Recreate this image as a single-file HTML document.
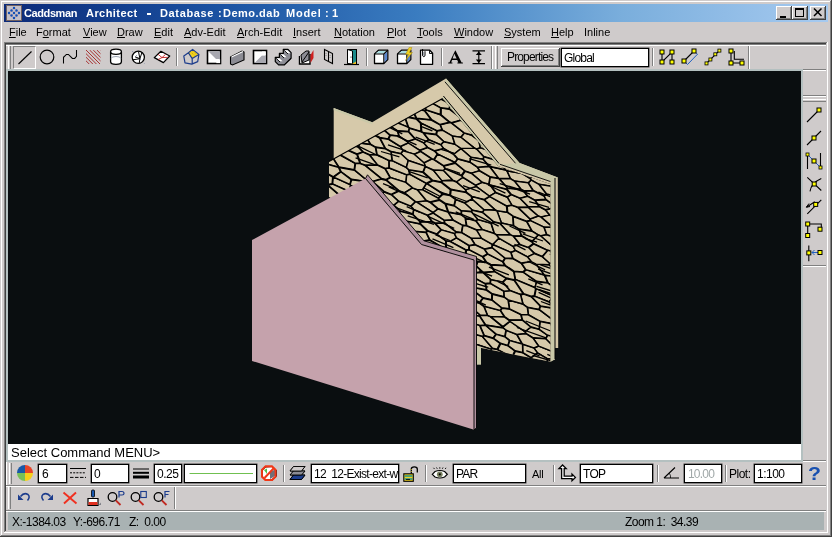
<!DOCTYPE html><html><head><meta charset="utf-8"><style>
html,body{margin:0;padding:0}
body{width:832px;height:537px;position:relative;overflow:hidden;background:#cfcbcb;font-family:"Liberation Sans",sans-serif}
div,svg{position:absolute}
.t{white-space:pre;color:#000;line-height:0;will-change:transform}
u{text-decoration:underline;text-underline-offset:1px;text-decoration-thickness:1px}
</style></head><body>
<div style="left:1px;top:1px;width:829px;height:1px;background:#fff"></div><div style="left:1px;top:1px;width:1px;height:534px;background:#fff"></div><div style="left:830px;top:1px;width:1px;height:535px;background:#808080"></div><div style="left:831px;top:0px;width:1px;height:537px;background:#404040"></div><div style="left:1px;top:535px;width:830px;height:1px;background:#808080"></div><div style="left:0px;top:536px;width:832px;height:1px;background:#404040"></div><div style="left:4px;top:4px;width:824px;height:18px;background:linear-gradient(to right,#0c2a78 0%,#1a50a0 25%,#3a7cc0 50%,#7aaedc 75%,#a6caf0 100%)"></div><svg style="left:6px;top:5px" width="16" height="16" viewBox="0 0 16 16">
<rect x="0" y="0" width="16" height="16" fill="#c4c0c8"/><rect x="0.5" y="0.5" width="15" height="15" fill="none" stroke="#706060"/>
<g stroke="#d08080" stroke-width="0.6" fill="none"><path d="M8 2.5 L13.5 8 L8 13.5 L2.5 8 Z M5.3 5.3 L10.7 10.7 M10.7 5.3 L5.3 10.7"/></g>
<g fill="#1050b8"><circle cx="8" cy="3" r="1.2"/><circle cx="5.5" cy="5.5" r="1.2"/><circle cx="10.5" cy="5.5" r="1.2"/><circle cx="3" cy="8" r="1.2"/><circle cx="8" cy="8" r="1.2"/><circle cx="13" cy="8" r="1.2"/><circle cx="5.5" cy="10.5" r="1.2"/><circle cx="10.5" cy="10.5" r="1.2"/><circle cx="8" cy="13" r="1.2"/></g></svg><div class="t" style="left:24px;top:13px;font-size:11px;letter-spacing:-0.4px;font-weight:bold;color:#fff;">Caddsman</div><div class="t" style="left:86px;top:13px;font-size:11px;letter-spacing:0.45px;font-weight:bold;color:#fff;">Architect</div><div class="t" style="left:160px;top:13px;font-size:11px;letter-spacing:0.65px;font-weight:bold;color:#fff;">Database</div><div class="t" style="left:218px;top:13px;font-size:11px;letter-spacing:0px;font-weight:bold;color:#fff;">:</div><div class="t" style="left:223px;top:13px;font-size:11px;letter-spacing:0.5px;font-weight:bold;color:#fff;">Demo.dab</div><div class="t" style="left:286px;top:13px;font-size:11px;letter-spacing:0.75px;font-weight:bold;color:#fff;">Model</div><div class="t" style="left:325px;top:13px;font-size:11px;letter-spacing:0px;font-weight:bold;color:#fff;">:</div><div class="t" style="left:332px;top:13px;font-size:11px;letter-spacing:0px;font-weight:bold;color:#fff;">1</div><div style="left:147px;top:13px;width:4px;height:2px;background:#fff"></div><div style="left:776px;top:6px;width:16px;height:14px;background:#cfcbcb;box-shadow:inset -1px -1px #404040,inset 1px 1px #fff,inset -2px -2px #808080"></div><div style="left:780px;top:16px;width:6px;height:2px;background:#000"></div><div style="left:792px;top:6px;width:16px;height:14px;background:#cfcbcb;box-shadow:inset -1px -1px #404040,inset 1px 1px #fff,inset -2px -2px #808080"></div><div style="left:795px;top:8px;width:9px;height:9px;box-sizing:border-box;border:1px solid #000;border-top-width:2px"></div><div style="left:810px;top:6px;width:16px;height:14px;background:#cfcbcb;box-shadow:inset -1px -1px #404040,inset 1px 1px #fff,inset -2px -2px #808080"></div><svg style="left:813px;top:8px" width="10" height="9"><path d="M1 0.5 L8.5 8 M8.5 0.5 L1 8" stroke="#000" stroke-width="1.5"/></svg><div class="t" style="left:9px;top:32px;font-size:11px;letter-spacing:0px;color:#000;"><u>F</u>ile</div><div class="t" style="left:36px;top:32px;font-size:11px;letter-spacing:0px;color:#000;">F<u>o</u>rmat</div><div class="t" style="left:83px;top:32px;font-size:11px;letter-spacing:0px;color:#000;"><u>V</u>iew</div><div class="t" style="left:117px;top:32px;font-size:11px;letter-spacing:0px;color:#000;"><u>D</u>raw</div><div class="t" style="left:154px;top:32px;font-size:11px;letter-spacing:0px;color:#000;"><u>E</u>dit</div><div class="t" style="left:184px;top:32px;font-size:11px;letter-spacing:0px;color:#000;"><u>A</u>dv-Edit</div><div class="t" style="left:237px;top:32px;font-size:11px;letter-spacing:0px;color:#000;"><u>A</u>rch-Edit</div><div class="t" style="left:293px;top:32px;font-size:11px;letter-spacing:0px;color:#000;"><u>I</u>nsert</div><div class="t" style="left:334px;top:32px;font-size:11px;letter-spacing:0px;color:#000;"><u>N</u>otation</div><div class="t" style="left:387px;top:32px;font-size:11px;letter-spacing:0px;color:#000;"><u>P</u>lot</div><div class="t" style="left:417px;top:32px;font-size:11px;letter-spacing:0px;color:#000;"><u>T</u>ools</div><div class="t" style="left:454px;top:32px;font-size:11px;letter-spacing:0px;color:#000;"><u>W</u>indow</div><div class="t" style="left:504px;top:32px;font-size:11px;letter-spacing:0px;color:#000;"><u>S</u>ystem</div><div class="t" style="left:551px;top:32px;font-size:11px;letter-spacing:0px;color:#000;"><u>H</u>elp</div><div class="t" style="left:584px;top:32px;font-size:11px;letter-spacing:0px;color:#000;">Inline</div><div style="left:4px;top:42px;width:823px;height:1px;background:#808080"></div><div style="left:4px;top:43px;width:822px;height:1px;background:#404040"></div><div style="left:4px;top:42px;width:1px;height:490px;background:#808080"></div><div style="left:5px;top:43px;width:1px;height:488px;background:#404040"></div><div style="left:827px;top:42px;width:1px;height:491px;background:#fff"></div><div style="left:4px;top:532px;width:824px;height:1px;background:#fff"></div><div style="left:6px;top:44px;width:820px;height:1px;background:#808080"></div><div style="left:6px;top:45px;width:820px;height:1px;background:#fff"></div><div style="left:8px;top:46px;width:1px;height:23px;background:#fff"></div><div style="left:10px;top:46px;width:1px;height:23px;background:#808080"></div><div style="left:13px;top:46px;width:23px;height:23px;box-sizing:border-box;border-top:1px solid #808080;border-left:1px solid #808080;border-right:1px solid #fff;border-bottom:1px solid #fff"></div><div style="left:176px;top:48px;width:1px;height:18px;background:#808080"></div><div style="left:177px;top:48px;width:1px;height:18px;background:#fff"></div><div style="left:366px;top:48px;width:1px;height:18px;background:#808080"></div><div style="left:367px;top:48px;width:1px;height:18px;background:#fff"></div><div style="left:441px;top:48px;width:1px;height:18px;background:#808080"></div><div style="left:442px;top:48px;width:1px;height:18px;background:#fff"></div><svg style="left:12px;top:46px" width="480" height="23" viewBox="12 46 480 23"><path d="M18.5 64 L31.5 51.5" stroke="#000" stroke-width="1.1"/><circle cx="47" cy="57" r="6.8" fill="none" stroke="#000" stroke-width="1.2"/><path d="M63.5 63.5 V57.3 L66.4 54.4 H68.4 L72.4 58.4 H74.7 L76.5 56.4 V50" fill="none" stroke="#000" stroke-width="1.05"/><clipPath id="hc"><rect x="86" y="50" width="14.5" height="14"/></clipPath><g clip-path="url(#hc)" stroke="#a83030" stroke-width="1.0"><path d="M68.0 50 L82.5 64.5"/><path d="M71.6 50 L86.1 64.5"/><path d="M75.2 50 L89.7 64.5"/><path d="M78.8 50 L93.3 64.5"/><path d="M82.4 50 L96.9 64.5"/><path d="M86.0 50 L100.5 64.5"/><path d="M89.6 50 L104.1 64.5"/><path d="M93.2 50 L107.7 64.5"/><path d="M96.8 50 L111.3 64.5"/><path d="M100.4 50 L114.9 64.5"/></g><path d="M110.6 51.8 V61.8 A5.4 2.6 0 0 0 121.4 61.8 V51.8" fill="#fff" stroke="#000" stroke-width="1.3"/><ellipse cx="116" cy="51.8" rx="5.4" ry="2.6" fill="#fff" stroke="#000" stroke-width="1.3"/><path d="M111.2 58.5 A4.8 2 0 0 1 120.8 58.5" fill="none" stroke="#9098a8" stroke-width="0.9"/><circle cx="138.3" cy="57.3" r="6.1" fill="#fff" stroke="#000" stroke-width="1.3"/><path d="M139.9 58.7 L138.5 51.5 M139.9 58.7 L135 56.8 M139.9 58.7 L142 52.3 M139.9 58.7 L133 59.8 M139.9 58.7 L139.2 63.5" stroke="#000" stroke-width="1" fill="none"/><path d="M132.1 51 L144.6 63.7" stroke="#6878a0" stroke-width="0.8" stroke-dasharray="1.2 4.5"/><path d="M154.3 57.6 L160.9 51.3 L169.7 56 L163.4 62.6 Z" fill="#fff" stroke="#000" stroke-width="1.3" stroke-linejoin="round"/><path d="M158.1 54.3 L162 57.6 L165.6 54.3 M162 57.6 L167.8 57.3 M162 57.6 L158.1 59.5" fill="none" stroke="#c02020" stroke-width="0.9"/><path d="M188.4 52.7 L192.6 49.4 L198.9 54.4 L192.2 58.6 Z" fill="#f0d020"/><path d="M192 50.5 L197 54.3 M190.5 52 L195.5 56" stroke="#b09000" stroke-width="0.6" stroke-dasharray="1 1"/><path d="M183.8 56.1 L188.4 52.7 L192.6 49.4 L198.9 54.4 L197.7 61.6 L191.8 64.1 L185 62.8 Z M188.4 52.7 L192.2 58.6 L198.9 54.4 M192.2 58.6 V64" fill="none" stroke="#1c3c8c" stroke-width="1.2" stroke-linejoin="round"/><rect x="207.5" y="50.5" width="13" height="13" fill="#fff" stroke="#000" stroke-width="1.6"/><path d="M208.5 51.5 H220 V59 H216 Z" fill="#a8a8b0"/><rect x="216.3" y="59.3" width="3.8" height="3.8" fill="#fff"/><path d="M230.5 57 L242 51 L244 52 V60 L232.5 65 L230.5 64 Z" fill="#8c8c94" stroke="#000" stroke-width="1.1"/><path d="M231.5 57 L243 51.5" stroke="#fff" stroke-width="1.2"/><rect x="253.5" y="50.5" width="13" height="13" fill="#fff" stroke="#000" stroke-width="1.6"/><path d="M254.5 63 H266 V55.5 H262 Z" fill="#a8a8b0"/><rect x="262" y="51.5" width="3.8" height="3.8" fill="#fff"/><path d="M275.3 57.3 H279.4 V53.4 H283.3 V49.3 H288 L291.1 52.6 V58.3 L284.3 64.9 H278.6 L275.3 61.6 Z" fill="#8c8c94" stroke="#000" stroke-width="1.2" stroke-linejoin="round"/><path d="M276.2 58.3 H279.4 L282.6 61.3 H279.4 Z" fill="#fff"/><path d="M280.2 54.3 H283.4 L286.6 57.3 H283.4 Z" fill="#fff"/><path d="M284.2 50.3 H287.4 L290.6 53.3 H287.4 Z" fill="#fff"/><path d="M276.2 58.3 L280 62" stroke="#000" stroke-width="0.9"/><path d="M280.2 54.3 L284 58" stroke="#000" stroke-width="0.9"/><path d="M284.2 50.3 L288 54" stroke="#000" stroke-width="0.9"/><path d="M284.3 64.9 L291 58.3" stroke="#000" stroke-width="1"/><path d="M299.5 56 V64 H310 V54" fill="#fff" stroke="#000" stroke-width="1.4"/><path d="M301 55 L306 51 H309 V60 L302 63 Z" fill="#8c8c94" stroke="#000"/><path d="M302 62 L309 52" stroke="#000"/><path d="M310.5 55 L313.5 50 V58 L310.5 63 Z" fill="#d02020"/><path d="M324.5 49.5 L332.5 53.5 V63.5 L324.5 59.5 Z" fill="#cfcbcb" stroke="#000" stroke-width="1.1"/><path d="M328.5 51.5 V61.5" stroke="#000"/><path d="M326 53 V57 M330 55 V59" stroke="#888" stroke-dasharray="1 1"/><path d="M344 64.5 H359" stroke="#000" stroke-width="1.2"/><rect x="347.5" y="49.5" width="9" height="14" fill="#1a8a8a" stroke="#000"/><path d="M347.5 49.5 L352.5 51 V64 L347.5 63.5 Z" fill="#fff" stroke="#000"/><circle cx="351" cy="57" r="0.6" fill="#000"/><path d="M352 64 L356 61.5 V64 Z" fill="#f0c020"/><path d="M374.5 54 L378.5 50.2 H387.8 V59.5 L383.8 63.5 H374.5 Z" fill="#fff" stroke="#000" stroke-width="1.3" stroke-linejoin="round"/><path d="M375.4 53.6 L378.8 50.9 H386.5 L383.4 53.6 Z" fill="#a8dce0"/><path d="M384.4 54.2 L387.1 51.5 V59.2 L384.4 62.4 Z" fill="#5a88d0"/><path d="M374.5 54 H383.8 V63.5 M383.8 54 L387.8 50.2" fill="none" stroke="#000" stroke-width="1.1"/><path d="M397.5 54 L401.5 50.2 H410.8 V59.5 L406.8 63.5 H397.5 Z" fill="#fff" stroke="#000" stroke-width="1.3" stroke-linejoin="round"/><path d="M398.4 53.6 L401.8 50.9 H409.5 L406.4 53.6 Z" fill="#a8dce0"/><path d="M407.4 54.2 L410.1 51.5 V59.2 L407.4 62.4 Z" fill="#5a88d0"/><path d="M397.5 54 H406.8 V63.5 M406.8 54 L410.8 50.2" fill="none" stroke="#000" stroke-width="1.1"/><path d="M409 47.5 L405.5 54.5 H408.5 L405.5 60.5 L412.5 52.5 H409.5 L412 47.5 Z" fill="#f0d020" stroke="#a08000" stroke-width="0.4"/><path d="M420.5 50.2 H429.8 L432.6 53.2 V64.3 H420.5 Z" fill="#fff" stroke="#000" stroke-width="1.3" stroke-linejoin="round"/><path d="M429.5 50.5 V53.5 H432.5" fill="none" stroke="#000" stroke-width="0.9"/><path d="M422.6 49 V55.8 Q423.8 57.6 425 55.8 V51.2" fill="none" stroke="#000" stroke-width="1"/><path d="M423.6 52 V55.5" stroke="#8890a0" stroke-width="0.8"/><path fill-rule="evenodd" d="M455.4 50.3 L461.6 62.4 H462.9 V63.6 H457.4 V62.4 H458.3 L457.2 59.9 H452.1 L451.2 62.4 H452.4 V63.6 H448.2 V62.4 H449.4 L454.7 51.6 Z M452.6 58.6 H456.6 L454.3 53.8 Z" fill="#000"/><path d="M472.5 50.8 H485 M472.5 63.6 H485 M478.8 51 V63.5" stroke="#000" stroke-width="1.15"/><path d="M475.8 55 L478.8 51.5 L481.8 55 Z M475.8 59.5 L478.8 63 L481.8 59.5 Z" fill="#000"/></svg><div style="left:491px;top:46px;width:1px;height:23px;background:#808080"></div><div style="left:492px;top:46px;width:1px;height:23px;background:#fff"></div><div style="left:495px;top:46px;width:1px;height:23px;background:#fff"></div><div style="left:497px;top:46px;width:1px;height:23px;background:#808080"></div><div style="left:501px;top:48px;width:59px;height:19px;box-sizing:border-box;background:#cfcbcb;box-shadow:inset -1px -1px #404040,inset 1px 1px #fff,inset -2px -2px #808080"></div><div class="t" style="left:507px;top:57px;font-size:12px;letter-spacing:-0.85px;color:#000;">Properties</div><div style="left:561px;top:48px;width:88px;height:19px;box-sizing:border-box;background:#fff;border:1px solid #000;box-shadow:0 0 0 0.5px #404040"></div><div class="t" style="left:564px;top:58px;font-size:12px;letter-spacing:-0.8px;color:#000;">Global</div><div style="left:652px;top:48px;width:1px;height:18px;background:#808080"></div><div style="left:653px;top:48px;width:1px;height:18px;background:#fff"></div><svg style="left:655px;top:46px" width="95" height="23" viewBox="655 46 95 23"><path d="M662 52 V62 L672 52 V62" fill="none" stroke="#000" stroke-width="1.1"/><rect x="660" y="50" width="4" height="4" fill="#ffff00" stroke="#000" stroke-width="1"/><rect x="660" y="60" width="4" height="4" fill="#ffff00" stroke="#000" stroke-width="1"/><rect x="670" y="50" width="4" height="4" fill="#ffff00" stroke="#000" stroke-width="1"/><rect x="670" y="60" width="4" height="4" fill="#ffff00" stroke="#000" stroke-width="1"/><path d="M684 61 L694 51" stroke="#000" stroke-width="1.1"/><path d="M694 51 L697.5 54.2 L687.5 64.5 L684 61" fill="none" stroke="#2060c0" stroke-width="1"/><rect x="682" y="59" width="4" height="4" fill="#ffff00" stroke="#000" stroke-width="1"/><rect x="692" y="49" width="4" height="4" fill="#ffff00" stroke="#000" stroke-width="1"/><path d="M706.5 63.4 L719.4 50.6" stroke="#000" stroke-width="1.1"/><rect x="705.0" y="61.9" width="3" height="3" fill="#ffff00" stroke="#000" stroke-width="0.8"/><rect x="708.9" y="58.0" width="3" height="3" fill="#ffff00" stroke="#000" stroke-width="0.8"/><rect x="713.8" y="52.8" width="3" height="3" fill="#ffff00" stroke="#000" stroke-width="0.8"/><rect x="717.9" y="49.1" width="3" height="3" fill="#ffff00" stroke="#000" stroke-width="0.8"/><path d="M731 51 V63 H742 M734.3 51 V59.2 H744" fill="none" stroke="#000" stroke-width="1.1"/><rect x="729" y="49" width="4" height="4" fill="#ffff00" stroke="#000" stroke-width="1"/><rect x="729" y="61" width="4" height="4" fill="#ffff00" stroke="#000" stroke-width="1"/><rect x="740" y="61" width="4" height="4" fill="#ffff00" stroke="#000" stroke-width="1"/></svg><div style="left:748px;top:46px;width:1px;height:23px;background:#808080"></div><div style="left:749px;top:46px;width:1px;height:23px;background:#fff"></div><div style="left:6px;top:69px;width:797px;height:2px;background:#b4c0c0"></div><div style="left:6px;top:69px;width:2px;height:393px;background:#b4c0c0"></div><div style="left:801px;top:69px;width:2px;height:393px;background:#b4c0c0"></div><div style="left:6px;top:460px;width:797px;height:2px;background:#b4c0c0"></div><div style="left:8px;top:71px;width:793px;height:373px;background:#0a0e10"></div><div style="left:8px;top:444px;width:793px;height:16px;background:#fff"></div><div class="t" style="left:11px;top:453px;font-size:13px;letter-spacing:0px;color:#000;">Select Command MENU></div><div style="left:803px;top:69px;width:23px;height:1px;background:#808080"></div><div style="left:803px;top:70px;width:23px;height:1px;background:#fff"></div><div style="left:803px;top:95px;width:23px;height:1px;background:#808080"></div><div style="left:803px;top:96px;width:23px;height:1px;background:#fff"></div><div style="left:803px;top:99px;width:23px;height:1px;background:#fff"></div><div style="left:803px;top:101px;width:23px;height:1px;background:#808080"></div><svg style="left:803px;top:102px" width="23" height="162" viewBox="803 102 23 162"><path d="M807 122 L819 110" stroke="#000" stroke-width="1.1"/><rect x="817" y="108" width="4" height="4" fill="#ffff00" stroke="#000" stroke-width="1"/><path d="M807 145 L821 131" stroke="#000" stroke-width="1.1"/><rect x="812" y="136" width="4" height="4" fill="#ffff00" stroke="#000" stroke-width="1"/><path d="M807.5 153 V169 M820.5 153 V168" stroke="#000" stroke-width="1.1"/><path d="M807.5 154.5 L820.5 167.5" stroke="#2060c0" stroke-width="1"/><rect x="806" y="153" width="3" height="3" fill="#ff0" stroke="#000" stroke-width="0.8"/><rect x="819" y="166" width="3" height="3" fill="#ff0" stroke="#000" stroke-width="0.8"/><rect x="812" y="159" width="4" height="4" fill="#ffff00" stroke="#000" stroke-width="1"/><path d="M807.3 177.4 L821.3 190.5 M810 191.4 Q811 183 821.3 178.4" fill="none" stroke="#000" stroke-width="1.1"/><rect x="812.2" y="182" width="4" height="4" fill="#ffff00" stroke="#000" stroke-width="1"/><path d="M806.4 207.2 L814.8 201.7 M807.3 213.8 L821.3 199.8" stroke="#000" stroke-width="1.1"/><path d="M806.4 207.2 L809 203.5 M806.4 207.2 L810 206.5" stroke="#000"/><rect x="813.7" y="202.4" width="4" height="4" fill="#ffff00" stroke="#000" stroke-width="1"/><path d="M807.7 235.5 V224 H821.3 V229" fill="none" stroke="#000" stroke-width="1.1"/><rect x="805.7" y="222" width="4" height="4" fill="#ffff00" stroke="#000" stroke-width="1"/><rect x="805.7" y="233.5" width="4" height="4" fill="#ffff00" stroke="#000" stroke-width="1"/><rect x="818" y="227.2" width="4" height="4" fill="#ffff00" stroke="#000" stroke-width="1"/><path d="M808.8 245.4 V261.2" stroke="#000" stroke-width="1.1"/><path d="M820 252.5 H812 M814.5 250 L812 252.5 L814.5 255" fill="none" stroke="#2060c0" stroke-width="1"/><rect x="806.8" y="250.9" width="4" height="4" fill="#ffff00" stroke="#000" stroke-width="1"/><rect x="818" y="250.5" width="4" height="4" fill="#ffff00" stroke="#000" stroke-width="1"/></svg><div style="left:803px;top:265px;width:23px;height:1px;background:#808080"></div><div style="left:803px;top:266px;width:23px;height:1px;background:#fff"></div><div style="left:803px;top:460px;width:23px;height:1px;background:#808080"></div><div style="left:803px;top:461px;width:23px;height:1px;background:#fff"></div><div style="left:6px;top:462px;width:1px;height:23px;background:#fff"></div><div style="left:9px;top:463px;width:1px;height:21px;background:#fff"></div><div style="left:11px;top:463px;width:1px;height:21px;background:#808080"></div><div class="t" style="left:532px;top:474px;font-size:11px;letter-spacing:-0.3px;color:#000;">All</div><svg style="left:12px;top:462px" width="815" height="23" viewBox="12 462 815 23"><path d="M25 473 V465 A8 8 0 0 0 17 473 Z" fill="#1858a8"/><path d="M25 473 V465 A8 8 0 0 1 33 473 Z" fill="#e84428"/><path d="M25 473 H17 A8 8 0 0 0 25 481 Z" fill="#78c058"/><path d="M25 473 H33 A8 8 0 0 1 25 481 Z" fill="#f8d018"/><path d="M70 468.5 H86" stroke="#000" stroke-width="1"/><path d="M70 472.8 H86" stroke="#000" stroke-width="1" stroke-dasharray="2 1.2"/><path d="M70 477.4 H86" stroke="#000" stroke-width="1" stroke-dasharray="3.5 1.5"/><path d="M133 469 H149" stroke="#000" stroke-width="1"/><path d="M133 472.8 H149" stroke="#000" stroke-width="2"/><path d="M133 477 H149" stroke="#000" stroke-width="3"/><path d="M262.5 470 L266 467 L272 466.5 L276 470 V476.5 L272 479.5 L266 480 L262.5 477 Z" fill="#fff" stroke="#000" stroke-width="1"/><path d="M270 472 L275 469.5 V476 L270 479 Z" fill="#707078"/><path d="M264 470 L267 468.5 V474 Z" fill="#50c050"/><path d="M265.5 466.5 H272 L275.5 470 V476.5 L272 480 H265.5 L262 476.5 V470 Z" fill="none" stroke="#f03818" stroke-width="1.9"/><path d="M264.5 478 L273.5 468.5" stroke="#f03818" stroke-width="2"/><path d="M293.5 475 H305 L301.5 479.5 H290 Z" fill="#1c3c8c" stroke="#000" stroke-width="0.9"/><path d="M293.5 471 H305 L301.5 475 H290 Z" fill="#8c8c94" stroke="#000" stroke-width="0.9"/><path d="M293.5 466.5 H305 L301.5 471 H290 Z" fill="#cfcbcb" stroke="#000" stroke-width="0.9"/><rect x="403.8" y="473.8" width="9.5" height="7.5" fill="#f0d020" stroke="#000" stroke-width="1.1"/><path d="M404.5 476 H412.5 M404.5 479 H412.5" stroke="#1c9090" stroke-width="1.3"/><path d="M410 479.5 H406" stroke="#000" stroke-width="0.8"/><path d="M411.3 473.5 V469 Q411.3 466.8 414.3 466.8 Q417.3 466.8 417.3 469 V472.5" fill="none" stroke="#000" stroke-width="1.3"/><path d="M411.3 472 V469" stroke="#f0d020" stroke-width="0.8" stroke-dasharray="1 1"/><path d="M432.3 474.3 L435 471.5 Q439.8 469.5 444.6 471.5 L447.3 474.3 L444.6 477 Q439.8 479 435 477 Z" fill="#fff" stroke="#000" stroke-width="1.2"/><circle cx="439.8" cy="474.3" r="2.9" fill="#788060"/><circle cx="439.8" cy="474.3" r="1.1" fill="#000"/><path d="M433.5 467.8 L434.5 469 M436.5 467.5 L437.3 468.8 M439.8 467.2 V468.7 M443 467.5 L442.3 468.8 M446 467.8 L445.2 469" stroke="#000" stroke-width="0.9"/><path d="M562.6 465 L566.2 468.6 H564.2 V476.2 H572 V474 L575.4 477.4 L572 480.8 V478.6 H561.6 V468.6 H559 Z" fill="#fff" stroke="#000" stroke-width="1.3" stroke-linejoin="miter"/><path d="M664 478 H679 M664 478 L675 467.5" stroke="#000" stroke-width="1.1"/><path d="M669 473 Q671 475 670.5 478" fill="none" stroke="#000" stroke-width="0.8"/><text x="808" y="480" font-family="Liberation Sans" font-weight="bold" font-size="19" fill="#1850b0" transform="translate(808 480) scale(1.12 0.98) translate(-808 -480)">?</text><path d="M189.5 473.5 H253" stroke="#70c050" stroke-width="1.2"/></svg><div style="left:38px;top:464px;width:29px;height:19px;box-sizing:border-box;background:#fff;border:1px solid #000;box-shadow:0 0 0 0.5px #404040"></div><div class="t" style="left:42px;top:474px;font-size:12px;letter-spacing:0px;color:#000;">6</div><div style="left:91px;top:464px;width:38px;height:19px;box-sizing:border-box;background:#fff;border:1px solid #000;box-shadow:0 0 0 0.5px #404040"></div><div class="t" style="left:94px;top:474px;font-size:12px;letter-spacing:0px;color:#000;">0</div><div style="left:154px;top:464px;width:28px;height:19px;box-sizing:border-box;background:#fff;border:1px solid #000;box-shadow:0 0 0 0.5px #404040"></div><div class="t" style="left:157px;top:474px;font-size:12px;letter-spacing:-0.5px;color:#000;">0.25</div><div style="left:184px;top:464px;width:73px;height:19px;box-sizing:border-box;background:#fff;border:1px solid #000;box-shadow:0 0 0 0.5px #404040"></div><svg style="left:184px;top:462px" width="73" height="23" viewBox="184 462 73 23"><path d="M189.5 473.5 H253" stroke="#70c050" stroke-width="1.2"/></svg><svg style="left:255px;top:462px" width="25" height="23" viewBox="255 462 25 23"><path d="M262.5 470 L266 467 L272 466.5 L276 470 V476.5 L272 479.5 L266 480 L262.5 477 Z" fill="#fff" stroke="#000" stroke-width="1"/><path d="M270 472 L275 469.5 V476 L270 479 Z" fill="#707078"/><path d="M264 470 L267 468.5 V474 Z" fill="#50c050"/><path d="M265.5 466.5 H272 L275.5 470 V476.5 L272 480 H265.5 L262 476.5 V470 Z" fill="none" stroke="#f03818" stroke-width="1.9"/><path d="M264.5 478 L273.5 468.5" stroke="#f03818" stroke-width="2"/></svg><div style="left:283px;top:465px;width:1px;height:17px;background:#808080"></div><div style="left:284px;top:465px;width:1px;height:17px;background:#fff"></div><svg style="left:288px;top:462px" width="20" height="23" viewBox="288 462 20 23"><path d="M293.5 475 H305 L301.5 479.5 H290 Z" fill="#1c3c8c" stroke="#000" stroke-width="0.9"/><path d="M293.5 471 H305 L301.5 475 H290 Z" fill="#8c8c94" stroke="#000" stroke-width="0.9"/><path d="M293.5 466.5 H305 L301.5 471 H290 Z" fill="#cfcbcb" stroke="#000" stroke-width="0.9"/></svg><div style="left:311px;top:464px;width:88px;height:19px;box-sizing:border-box;background:#fff;border:1px solid #000;box-shadow:0 0 0 0.5px #404040"></div><div class="t" style="left:314px;top:474px;font-size:12px;letter-spacing:-0.75px;width:84px;overflow:hidden;height:8px;line-height:0"> </div><div style="left:312px;top:465px;width:86px;height:17px;overflow:hidden"><div class="t" style="left:2px;top:9px;font-size:12px;letter-spacing:-0.7px;line-height:0">12&nbsp; 12-Exist-ext-wall</div></div><div style="left:425px;top:465px;width:1px;height:17px;background:#808080"></div><div style="left:426px;top:465px;width:1px;height:17px;background:#fff"></div><div style="left:453px;top:464px;width:73px;height:19px;box-sizing:border-box;background:#fff;border:1px solid #000;box-shadow:0 0 0 0.5px #404040"></div><div class="t" style="left:456px;top:474px;font-size:12px;letter-spacing:-0.8px;color:#000;">PAR</div><div style="left:553px;top:465px;width:1px;height:17px;background:#808080"></div><div style="left:554px;top:465px;width:1px;height:17px;background:#fff"></div><div style="left:580px;top:464px;width:73px;height:19px;box-sizing:border-box;background:#fff;border:1px solid #000;box-shadow:0 0 0 0.5px #404040"></div><div class="t" style="left:583px;top:474px;font-size:12px;letter-spacing:-0.7px;color:#000;">TOP</div><div style="left:657px;top:465px;width:1px;height:17px;background:#808080"></div><div style="left:658px;top:465px;width:1px;height:17px;background:#fff"></div><div style="left:684px;top:464px;width:38px;height:19px;box-sizing:border-box;background:#fff;border:1px solid #000;box-shadow:0 0 0 0.5px #404040"></div><div class="t" style="left:688px;top:474px;font-size:12px;letter-spacing:-0.8px;color:#a0a8a8;">10.00</div><div style="left:725px;top:465px;width:1px;height:17px;background:#808080"></div><div style="left:726px;top:465px;width:1px;height:17px;background:#fff"></div><div class="t" style="left:729px;top:474px;font-size:12px;letter-spacing:-0.5px;color:#000;">Plot:</div><div style="left:754px;top:464px;width:48px;height:19px;box-sizing:border-box;background:#fff;border:1px solid #000;box-shadow:0 0 0 0.5px #404040"></div><div class="t" style="left:757px;top:474px;font-size:12px;letter-spacing:-0.5px;color:#000;">1:100</div><div style="left:6px;top:485px;width:820px;height:1px;background:#808080"></div><div style="left:6px;top:486px;width:820px;height:1px;background:#fff"></div><div style="left:8px;top:487px;width:1px;height:22px;background:#fff"></div><div style="left:10px;top:487px;width:1px;height:22px;background:#808080"></div><svg style="left:12px;top:487px" width="165" height="23" viewBox="12 487 165 23"><path d="M27.5 500.5 Q30.5 497 28 494.5 Q24 492 20.5 496.5" fill="none" stroke="#1c3c8c" stroke-width="1.5"/><path d="M18 494.5 L18 500 L23.5 500 Z" fill="#1c3c8c"/><path d="M43.5 500.5 Q40.5 497 43 494.5 Q47 492 50.5 496.5" fill="none" stroke="#1c3c8c" stroke-width="1.5"/><path d="M53 494.5 L53 500 L47.5 500 Z" fill="#1c3c8c"/><path d="M63.5 492.5 L76.5 503.5 M64 503.5 L76 492.5" stroke="#f03020" stroke-width="1.9"/><rect x="91.5" y="490" width="3" height="7" rx="1" fill="#1858b0" stroke="#000" stroke-width="0.8"/><path d="M88 498.5 H98 V505.5 H88 Z" fill="#fff" stroke="#000" stroke-width="1.2"/><rect x="88.5" y="502" width="9" height="3" fill="#e03020"/><path d="M98.5 505 L101 502.5 V505 Z" fill="#808088"/><circle cx="112.5" cy="497" r="4.3" fill="none" stroke="#000" stroke-width="1.3"/><path d="M115.8 500.3 L120.5 505" stroke="#c02820" stroke-width="1.8"/><path d="M119 497.5 V491.5 H122 Q124 491.5 124 493.5 Q124 495 122 495 H119" fill="none" stroke="#1c3c8c" stroke-width="1.2"/><circle cx="135.5" cy="497" r="4.3" fill="none" stroke="#000" stroke-width="1.3"/><path d="M138.8 500.3 L143.5 505" stroke="#c02820" stroke-width="1.8"/><rect x="140.8" y="491.5" width="5.5" height="6" fill="none" stroke="#1c3c8c" stroke-width="1.1"/><circle cx="158.5" cy="497" r="4.3" fill="none" stroke="#000" stroke-width="1.3"/><path d="M161.8 500.3 L166.5 505" stroke="#c02820" stroke-width="1.8"/><path d="M169.5 491.5 H165 V497.5 M165 494.5 H168.5" fill="none" stroke="#1c3c8c" stroke-width="1.2"/></svg><div style="left:174px;top:487px;width:1px;height:22px;background:#808080"></div><div style="left:175px;top:487px;width:1px;height:22px;background:#fff"></div><div style="left:6px;top:510px;width:820px;height:1px;background:#808080"></div><div style="left:6px;top:511px;width:820px;height:1px;background:#fff"></div><div style="left:8px;top:512px;width:816px;height:18px;background:#a9b2b3"></div><div class="t" style="left:12px;top:522px;font-size:12px;letter-spacing:-0.5px;color:#000;">X:-1384.03</div><div class="t" style="left:73px;top:522px;font-size:12px;letter-spacing:-0.5px;color:#000;">Y:-696.71</div><div class="t" style="left:129px;top:522px;font-size:12px;letter-spacing:-0.5px;color:#000;">Z:&nbsp; 0.00</div><div class="t" style="left:625px;top:522px;font-size:12px;letter-spacing:-0.55px;color:#000;">Zoom 1:&nbsp; 34.39</div><svg style="left:8px;top:71px" width="793" height="373" viewBox="8 71 793 373"><polygon points="333.7,108 372.2,122.2 446,78.5 519.6,163 557.8,177.5 558.2,348 555,348 555,359.5 550.2,361.5 476.8,347 333.7,250" fill="#d6c9aa"/><polygon points="446,78.5 519.6,163 516.5,164 444.9,81.8" fill="#c9c8a8"/><polyline points="444.9,81.8 517,165" fill="none" stroke="#000" stroke-width="0.9"/><polygon points="519.6,163 557.8,177.5 553.5,182.6 500,164.3" fill="#c9c8a8"/><polyline points="500,164.3 553.5,182.6" fill="none" stroke="#000" stroke-width="0.9"/><polygon points="550.5,180 555,178 555,359 550.5,362" fill="#c9c8a8"/><path d="M555 178 V359" stroke="#000" stroke-width="1"/><polygon points="443.4,96 500,164 496.5,166.5 441,99" fill="#c9c8a8"/><path d="M443.4,96 L499,163.5" fill="none" stroke="#000" stroke-width="1"/><clipPath id="sc"><path d="M329 161.5 L442.6 98.5 L498 166 L550.2 184 L550.2 361.5 Q520 356 476.8 347 L476.8 300 L329 300 Z"/></clipPath><g clip-path="url(#sc)"><rect x="320" y="90" width="240" height="280" fill="#000"/><g fill="#d6c9aa" stroke="#000" stroke-width="1.4" stroke-linejoin="round"><polygon points="317.0,279.6 319.7,281.3 328.7,290.4 316.7,291.3 305.9,282.9 313.1,278.8"/>
<polygon points="530.9,357.8 522.9,352.9 515.4,351.2 513.1,356.2 524.9,363.7 526.2,364.2 534.7,362.7 534.6,361.7"/>
<polygon points="448.2,212.3 453.0,219.8 462.8,225.3 466.3,225.6 465.1,217.8 461.3,214.9 448.3,212.3"/>
<polygon points="321.4,205.9 326.9,208.8 329.1,212.3 326.4,215.8 311.2,212.4 310.2,211.4 309.9,204.3"/>
<polygon points="425.7,109.8 422.7,102.8 408.2,95.8 408.0,95.8 408.4,105.4 411.7,107.4 424.6,110.4"/>
<polygon points="438.2,275.7 428.0,276.4 421.7,271.7 424.5,267.3 437.5,271.8"/>
<polygon points="344.6,124.7 329.8,121.6 326.1,118.0 335.0,112.6 339.6,115.7"/>
<polygon points="499.7,161.1 494.6,152.3 497.0,151.5 505.6,153.9 511.3,162.2 500.5,161.6"/>
<polygon points="311.6,194.8 321.6,205.6 326.9,208.5 334.9,205.7 331.2,199.6 326.5,197.0"/>
<polygon points="398.6,201.4 394.0,205.3 400.1,211.1 412.8,214.3 413.6,209.3 411.1,206.3"/>
<polygon points="408.5,127.0 404.9,116.8 416.1,119.0 420.5,123.2 421.0,131.4 409.6,128.0"/>
<polygon points="492.6,244.5 510.7,252.3 515.4,250.4 513.1,246.4 498.8,238.2"/>
<polygon points="383.9,191.8 372.6,181.6 365.8,179.4 363.2,181.2 367.6,192.0 378.6,194.9"/>
<polygon points="476.7,366.7 468.5,359.8 468.8,356.1 486.7,360.2 491.9,367.3 491.9,368.5"/>
<polygon points="479.9,316.2 480.4,315.4 487.6,315.6 490.2,316.7 502.7,326.9 503.0,327.8 485.8,324.9 485.7,324.8"/>
<polygon points="379.6,138.1 385.1,148.4 375.6,147.0 370.6,144.1 365.9,136.5 374.1,135.1"/>
<polygon points="377.6,165.0 369.7,154.9 376.9,154.8 388.9,160.7 388.9,168.0 385.2,168.5"/>
<polygon points="553.7,102.1 557.5,95.7 556.5,94.8 543.0,89.0 537.7,90.8 543.4,97.5"/>
<polygon points="466.1,249.9 450.2,241.4 456.5,238.0 468.9,245.7 468.8,249.5"/>
<polygon points="414.2,288.7 416.2,295.4 418.2,296.9 439.4,302.3 437.9,297.9 419.8,287.5 415.7,287.4"/>
<polygon points="505.5,265.5 514.0,271.2 522.8,272.0 525.4,269.6 521.2,263.4 512.7,258.7 505.3,258.4 503.2,261.8"/>
<polygon points="483.6,272.5 494.6,271.7 506.2,278.4 502.5,281.9 490.9,279.6"/>
<polygon points="390.0,239.3 398.0,240.1 406.5,245.4 408.4,250.9 402.2,252.7 388.2,241.7"/>
<polygon points="482.1,336.3 492.5,348.5 490.6,349.0 476.7,344.4 473.6,341.7 473.5,334.0"/>
<polygon points="483.6,156.5 476.7,149.1 474.9,148.4 460.9,148.4 460.9,148.5 471.1,157.3 483.1,159.3"/>
<polygon points="386.3,92.5 375.7,93.1 362.5,83.3 368.5,80.1 381.4,84.1"/>
<polygon points="510.4,178.5 506.9,171.0 505.4,170.0 490.1,166.8 498.6,178.2 499.4,178.5"/>
<polygon points="343.0,307.4 347.6,315.3 364.9,319.4 366.1,318.6 362.8,314.6 350.3,307.5"/>
<polygon points="520.7,294.7 523.1,304.0 527.4,307.2 538.9,309.4 540.1,306.1 531.2,296.8 523.6,294.2"/>
<polygon points="536.5,281.7 523.2,272.3 514.1,271.6 515.5,279.4 534.9,287.5"/>
<polygon points="547.8,162.6 553.8,170.5 544.0,169.7 537.0,165.9 535.9,161.8 541.8,160.2"/>
<polygon points="525.1,99.8 529.8,106.6 547.4,111.9 547.6,111.9 548.0,110.9 536.2,100.2 529.7,98.2"/>
<polygon points="416.9,202.1 433.0,212.6 437.9,208.9 430.1,202.4 426.4,200.8"/>
<polygon points="337.8,140.7 324.8,138.6 324.3,144.2 337.5,152.4 342.2,147.7"/>
<polygon points="487.6,315.3 484.0,306.2 500.3,310.6 504.2,316.6 490.3,316.4"/>
<polygon points="377.6,322.4 366.2,318.7 365.0,319.5 373.6,352.4 384.3,331.1"/>
<polygon points="553.6,186.7 547.1,178.4 536.5,175.0 529.9,178.3 531.1,179.9 539.1,184.3"/>
<polygon points="444.5,220.2 452.8,220.1 462.6,225.5 461.4,232.4 456.1,231.8 444.8,223.0"/>
<polygon points="399.9,113.5 395.9,109.7 395.0,106.2 401.4,103.9 407.9,105.8 411.2,107.8 416.1,118.3 416.0,118.4 404.6,116.1"/>
<polygon points="458.9,301.3 468.4,304.7 480.2,315.3 479.7,316.1 465.2,313.1 458.6,308.8"/>
<polygon points="355.0,163.5 338.6,154.3 332.4,156.9 338.9,166.9 339.1,167.0 354.2,169.7"/>
<polygon points="496.5,109.3 511.1,120.9 518.6,118.1 508.4,109.5 496.4,105.9"/>
<polygon points="445.5,168.9 461.3,175.5 464.5,170.8 455.1,163.2 443.9,166.0"/>
<polygon points="547.0,152.8 554.1,161.6 561.8,164.7 566.0,160.3 561.9,154.6 560.8,153.8 548.1,151.1"/>
<polygon points="357.4,302.5 355.1,292.6 354.1,291.8 345.9,288.1 337.4,293.5 350.4,301.2"/>
<polygon points="530.3,140.9 539.4,143.4 547.8,151.0 546.7,152.7 534.3,151.4 529.9,149.3"/>
<polygon points="342.5,226.3 347.9,231.8 345.6,234.9 335.2,232.9 327.7,227.4 332.9,222.9"/>
<polygon points="476.6,148.9 480.2,147.6 478.7,140.7 471.7,135.4 464.3,133.2 460.9,137.3 474.8,148.2"/>
<polygon points="459.2,301.1 468.2,304.4 476.4,302.2 463.2,292.3 461.6,291.7 457.2,299.6"/>
<polygon points="507.6,87.5 507.1,91.1 510.0,93.8 524.8,99.6 529.4,97.9 520.3,87.1 519.1,86.7"/>
<polygon points="507.7,212.4 507.2,206.3 512.1,205.4 517.9,207.7 529.9,219.1 530.0,220.4 526.6,221.2 513.2,216.1"/>
<polygon points="405.9,182.3 406.6,174.9 389.0,168.1 385.3,168.6 390.3,177.4"/>
<polygon points="356.4,120.4 340.2,115.4 335.2,112.2 333.8,110.4 343.4,107.8 350.7,109.6 355.1,113.5"/>
<polygon points="541.1,217.0 538.3,216.0 528.1,207.1 528.2,206.8 539.0,206.6 545.4,210.1 549.4,215.0"/>
<polygon points="386.6,312.9 386.3,316.5 382.1,317.0 366.6,308.2 365.6,307.0 376.4,303.0 379.6,305.0"/>
<polygon points="533.3,337.8 545.6,338.6 547.3,335.3 539.0,329.4 530.9,327.2 525.2,331.8 526.2,333.5"/>
<polygon points="492.3,293.7 486.8,289.8 485.6,284.1 490.6,283.6 503.6,291.2 504.1,296.8"/>
<polygon points="348.9,221.9 343.0,226.4 348.4,231.6 362.7,236.2 363.6,234.0 350.6,222.2"/>
<polygon points="446.1,330.4 439.4,323.2 446.5,320.6 449.2,321.9 457.2,328.4 456.2,331.3 446.4,330.5"/>
<polygon points="481.6,120.8 484.4,124.7 503.8,132.8 504.4,132.8 501.6,123.0 490.9,117.8"/>
<polygon points="488.8,184.2 490.0,185.0 495.5,192.5 489.4,196.0 476.2,186.4 475.8,185.4 482.2,182.4"/>
<polygon points="406.0,167.4 392.5,160.9 389.2,160.8 389.3,168.0 406.4,174.7 409.6,174.1 408.4,169.6"/>
<polygon points="453.5,103.5 450.3,104.0 449.4,108.8 459.4,116.6 472.8,115.8 467.7,110.0"/>
<polygon points="451.3,95.5 439.0,89.3 433.4,90.2 436.6,96.7 449.8,103.6 453.0,103.1"/>
<polygon points="440.9,144.9 443.6,148.4 453.6,154.2 460.9,148.5 460.8,148.4 454.9,144.3 443.8,141.7"/>
<polygon points="355.2,91.8 354.3,84.2 341.9,79.3 339.7,86.0 353.5,91.8"/>
<polygon points="425.3,166.3 425.2,166.2 424.2,162.9 431.8,159.1 434.2,159.8 443.4,165.9 445.0,168.9 443.5,170.4 433.4,169.9"/>
<polygon points="337.6,279.2 337.6,279.2 332.0,268.1 316.5,264.6 320.3,271.3"/>
<polygon points="421.4,257.0 425.5,253.0 428.6,253.7 435.2,257.5 438.1,265.2 437.3,265.5 422.9,258.6"/>
<polygon points="449.3,347.7 435.4,345.0 434.4,346.2 437.5,350.2 452.7,357.3 454.4,356.5"/>
<polygon points="511.7,152.5 506.1,154.0 511.7,162.0 517.3,164.8 524.8,164.2 516.6,155.3"/>
<polygon points="358.5,147.2 338.8,139.9 338.6,139.6 342.9,134.3 350.1,135.8 358.7,142.8"/>
<polygon points="404.5,192.6 412.3,187.8 405.7,182.4 390.5,177.6 386.3,179.9 399.0,190.6"/>
<polygon points="396.6,87.8 396.7,83.2 405.2,84.7 412.8,89.8 407.9,95.4 407.7,95.4 402.1,92.5"/>
<polygon points="386.3,202.9 379.4,206.3 385.5,211.7 398.0,215.7 400.0,211.1 393.9,205.3"/>
<polygon points="321.7,168.9 326.1,163.9 317.0,157.3 306.3,158.6 306.3,160.3"/>
<polygon points="441.1,114.8 441.2,108.1 449.3,109.2 459.1,116.8 460.5,120.1 451.5,122.6 449.7,122.0"/>
<polygon points="553.9,186.6 564.8,189.7 564.1,180.7 564.0,180.6 548.8,177.5 547.4,178.5 553.8,186.6"/>
<polygon points="449.7,122.5 451.5,123.1 464.1,133.0 460.7,137.2 452.4,135.9 442.4,130.0 440.4,124.9"/>
<polygon points="501.5,222.9 513.3,225.6 512.8,216.3 507.3,212.4 497.0,210.9"/>
<polygon points="554.2,307.4 554.1,308.5 561.0,315.6 582.7,321.3 568.1,308.5"/>
<polygon points="514.8,350.9 512.5,355.8 507.9,354.9 497.7,349.6 500.7,343.7 508.0,345.9"/>
<polygon points="355.4,211.1 353.1,205.5 359.5,205.3 366.4,208.3 373.1,214.5 371.5,217.9 361.6,215.7"/>
<polygon points="427.7,147.7 434.4,151.1 437.2,154.0 433.9,159.4 431.7,158.6 420.8,151.4 420.2,150.4"/>
<polygon points="378.1,124.8 378.1,122.1 374.1,119.5 355.4,113.6 356.6,120.6 359.9,123.6 368.6,128.1"/>
<polygon points="373.4,214.6 371.9,218.1 382.2,225.9 393.9,229.0 394.6,225.8 384.3,216.2"/>
<polygon points="458.8,254.6 465.7,254.2 477.1,261.5 475.8,265.8 462.1,261.0 461.9,260.8"/>
<polygon points="422.8,102.3 408.5,95.6 413.4,90.1 419.0,91.5 427.2,97.2 429.0,101.4"/>
<polygon points="404.6,193.1 415.3,201.7 410.9,206.1 398.8,201.2 391.7,194.7 399.1,191.1"/>
<polygon points="497.0,210.6 507.0,212.2 506.5,206.1 489.8,196.7 484.3,199.8 495.5,209.9"/>
<polygon points="404.2,225.5 394.9,225.9 394.1,229.1 397.0,231.7 415.4,239.3 415.9,239.3 413.6,231.4"/>
<polygon points="567.1,275.0 555.8,271.4 549.4,264.9 549.7,263.1 560.7,264.7 568.4,270.7"/>
<polygon points="338.1,139.4 323.9,128.9 322.8,125.5 329.5,124.1 342.5,133.9"/>
<polygon points="361.0,221.4 372.1,228.4 378.0,229.5 381.8,225.9 371.7,218.4 361.8,216.2"/>
<polygon points="451.4,95.1 439.2,88.9 434.9,82.5 444.4,80.3 445.2,80.5 455.3,88.7 452.9,94.9"/>
<polygon points="559.1,224.0 568.9,228.4 571.4,227.7 568.1,221.2 564.0,218.8 552.7,216.7"/>
<polygon points="536.1,264.1 544.3,275.0 544.9,275.3 553.4,276.2 555.6,271.7 549.0,264.8"/>
<polygon points="534.1,348.1 537.6,352.9 547.3,358.7 555.5,359.2 553.0,351.8 538.8,346.1"/>
<polygon points="553.9,186.9 564.9,190.0 571.4,194.3 569.1,202.4 567.9,202.2 556.7,195.8"/>
<polygon points="547.6,282.8 544.4,275.4 543.9,275.1 526.1,269.9 523.5,272.3 536.7,281.3"/>
<polygon points="371.0,280.5 353.2,277.2 347.4,271.1 349.6,267.1 365.7,274.2"/>
<polygon points="494.1,233.3 490.9,223.4 477.8,219.6 476.2,220.8 482.3,229.4"/>
<polygon points="398.4,330.6 405.3,329.1 412.5,332.5 418.3,340.8 417.9,341.1 404.3,339.5 398.5,334.0"/>
<polygon points="503.7,133.0 484.4,124.9 481.3,130.0 494.3,139.4 499.7,141.1"/>
<polygon points="388.4,118.9 387.1,116.5 399.6,113.8 404.5,116.5 408.0,127.1"/>
<polygon points="501.5,223.0 513.3,225.7 519.0,229.3 521.3,235.7 513.3,236.0 510.5,234.8 499.9,223.3"/>
<polygon points="511.9,205.1 507.5,197.3 511.2,194.6 520.1,198.4 528.1,206.7 528.0,207.1 517.9,207.2"/>
<polygon points="447.7,211.9 438.4,208.7 430.6,202.3 439.4,200.2 445.2,204.2 447.8,211.9"/>
<polygon points="348.7,249.9 347.8,250.6 334.6,249.0 328.4,244.9 327.0,238.9 337.0,240.0 347.0,246.4"/>
<polygon points="552.8,295.9 536.2,288.7 534.7,296.1 549.3,301.8"/>
<polygon points="502.1,308.2 500.7,310.7 504.6,316.5 509.2,319.9 522.1,319.9 520.7,314.5 509.5,309.1"/>
<polygon points="498.1,97.3 491.9,101.6 490.1,100.6 479.4,90.4 481.5,86.9 489.3,89.6"/>
<polygon points="545.4,209.7 555.8,207.0 545.8,199.7 535.2,200.4 539.4,206.4"/>
<polygon points="485.6,325.4 485.7,325.4 495.8,334.1 493.1,337.9 484.3,335.4 480.1,325.8"/>
<polygon points="491.7,299.8 483.0,297.7 474.8,291.5 474.4,287.8 486.2,290.1 491.8,294.0"/>
<polygon points="475.5,105.3 485.9,110.6 495.9,109.0 495.8,105.7 491.8,101.9 489.9,101.0 474.1,98.3 474.2,103.9"/>
<polygon points="520.8,189.6 523.4,191.0 527.3,196.1 520.0,198.1 511.4,194.5 507.4,189.6 507.7,188.2"/>
<polygon points="431.2,120.1 416.7,118.6 416.6,118.7 421.3,123.1 436.9,130.6 442.0,129.8 440.0,124.8"/>
<polygon points="551.2,323.1 552.6,319.8 539.2,309.8 527.6,307.6 528.5,314.7 540.2,321.3 550.2,323.3"/>
<polygon points="395.6,281.5 414.1,288.7 416.1,295.3 399.8,292.5 399.2,292.2 390.7,284.2"/>
<polygon points="332.1,183.7 332.7,177.1 323.5,171.5 313.9,173.4 326.7,184.3 327.4,184.5"/>
<polygon points="359.0,147.5 363.1,151.8 369.6,154.6 376.7,154.6 375.4,147.4 370.2,144.5 359.3,143.1"/>
<polygon points="441.6,180.4 433.3,170.4 425.5,166.6 423.4,172.1 432.4,180.1 441.2,181.9"/>
<polygon points="506.8,91.2 495.9,87.4 489.6,89.4 498.5,97.2 507.9,99.7 509.7,93.8"/>
<polygon points="404.7,192.8 412.6,188.0 417.3,189.8 426.2,200.6 416.7,201.9 415.5,201.6"/>
<polygon points="381.5,321.3 382.1,317.2 366.5,308.2 363.0,314.7 366.3,318.7 377.6,322.3"/>
<polygon points="337.7,279.2 337.7,279.2 353.0,279.1 361.5,286.9 354.2,291.5 345.8,287.8 338.6,281.3"/>
<polygon points="479.3,170.6 477.3,167.2 469.9,162.2 457.7,159.0 455.2,162.5 455.3,162.8 464.9,170.8 471.5,173.1"/>
<polygon points="539.0,133.4 547.2,129.1 552.2,130.3 559.7,135.8 562.2,144.5 559.2,144.7 543.5,137.9"/>
<polygon points="473.0,116.2 459.8,117.0 461.2,120.3 477.1,129.0 480.7,129.7 483.8,124.6 481.0,120.8"/>
<polygon points="386.9,116.0 374.5,106.7 375.1,104.6 395.1,109.7 399.2,113.5"/>
<polygon points="548.2,283.0 545.1,275.5 553.5,276.4 569.0,285.4 569.5,285.9 561.2,288.6 552.1,285.8"/>
<polygon points="354.8,210.9 352.4,205.4 341.8,199.1 331.9,199.7 335.6,205.8 341.6,208.6"/>
<polygon points="338.3,281.6 345.4,287.9 337.0,293.1 333.3,292.3 329.3,290.4 320.3,281.2"/>
<polygon points="351.3,220.9 341.7,209.2 355.1,211.4 361.2,216.0 360.4,221.1"/>
<polygon points="536.2,132.0 525.0,119.8 519.0,118.3 511.4,121.2 511.7,123.2 520.2,129.2"/>
<polygon points="474.6,349.1 465.9,347.5 458.4,340.7 463.3,338.2 473.3,341.8 476.4,344.5"/>
<polygon points="494.0,139.6 481.0,130.3 477.5,129.7 472.1,135.2 479.1,140.4 490.0,142.6"/>
<polygon points="319.0,186.1 326.9,185.0 327.6,185.2 340.9,196.6 341.4,198.5 331.4,199.1 326.8,196.4"/>
<polygon points="513.7,225.6 519.2,229.0 531.8,230.8 526.6,221.6 513.1,216.6"/>
<polygon points="394.1,263.9 409.1,268.9 411.0,268.2 406.3,258.8 402.2,255.8 396.0,255.0 390.7,258.4"/>
<polygon points="492.3,368.7 492.4,367.5 512.4,370.4 517.9,378.5 512.4,379.8 498.7,374.9"/>
<polygon points="341.5,196.8 342.1,198.7 352.8,205.1 359.1,204.9 355.8,196.6 351.2,194.1"/>
<polygon points="420.7,223.9 420.6,222.0 431.9,222.1 434.8,223.4 441.0,229.8 436.8,233.9 427.7,230.6"/>
<polygon points="464.7,203.0 472.1,199.2 484.0,209.7 482.6,212.3 472.3,210.1"/>
<polygon points="483.8,156.4 476.9,149.2 480.5,147.8 494.3,152.3 499.5,161.1"/>
<polygon points="533.2,338.1 545.9,338.8 555.4,348.3 554.7,351.5 553.0,351.7 538.8,346.1"/>
<polygon points="389.2,297.6 376.3,296.4 376.2,302.3 376.7,302.8 379.9,304.6 397.2,307.0 396.8,303.9"/>
<polygon points="554.8,125.7 552.3,130.2 559.8,135.6 570.4,137.5 571.8,133.4 558.9,126.0"/>
<polygon points="390.5,284.2 399.1,292.3 388.8,295.0 375.0,285.2 373.6,282.1 387.1,282.9"/>
<polygon points="490.8,349.1 492.6,348.6 497.3,349.6 508.0,355.3 507.2,363.3 493.9,357.8"/>
<polygon points="409.4,128.4 421.2,131.8 423.3,133.0 428.6,139.7 423.6,142.8 415.4,138.9 408.7,131.5"/>
<polygon points="373.8,134.7 365.5,136.1 353.6,131.4 350.7,128.1 359.9,123.9 368.4,128.2"/>
<polygon points="385.8,179.5 381.4,178.4 365.2,165.4 377.8,165.3 385.0,168.8 389.9,177.3"/>
<polygon points="554.6,125.4 544.7,118.3 547.8,112.3 548.0,112.2 560.7,121.6 558.7,125.7"/>
<polygon points="372.7,268.4 370.8,267.8 366.1,274.2 371.3,280.5 373.6,282.0 387.0,282.8"/>
<polygon points="496.5,234.9 510.5,234.9 513.2,236.1 519.6,244.4 513.1,246.3 498.9,238.2"/>
<polygon points="445.8,330.8 434.1,330.8 436.7,335.3 445.9,340.1 453.3,338.8 446.1,331.0"/>
<polygon points="544.1,169.8 553.9,170.6 561.7,174.7 564.1,180.5 548.8,177.3"/>
<polygon points="332.6,183.9 333.3,177.1 333.5,177.2 349.9,184.6 350.5,185.2 348.8,191.2"/>
<polygon points="526.5,148.9 525.8,155.6 516.9,154.6 511.8,152.0 507.7,146.3 520.3,146.1"/>
<polygon points="509.6,308.8 521.0,314.4 528.2,314.6 527.3,307.4 522.8,304.1 508.4,300.0"/>
<polygon points="551.1,225.7 551.4,227.2 544.0,227.2 530.4,220.6 530.3,219.2 538.3,216.1 541.2,217.1"/>
<polygon points="375.7,245.6 366.1,240.4 363.1,236.5 364.0,234.2 371.0,234.5 383.7,241.3 381.7,246.1"/>
<polygon points="438.2,198.1 442.5,193.8 426.9,183.7 426.5,183.6 422.7,189.8"/>
<polygon points="455.8,199.5 454.4,205.7 461.4,210.7 471.3,211.5 472.2,210.1 464.6,203.0"/>
<polygon points="530.4,220.7 527.0,221.5 532.2,231.0 538.3,234.8 540.9,235.8 546.6,234.8 543.9,227.2"/>
<polygon points="389.8,238.9 378.6,229.8 382.4,226.2 393.8,229.2 396.6,231.7 397.7,239.6"/>
<polygon points="544.2,227.3 546.9,234.7 558.6,238.5 561.0,234.2 551.4,227.4"/>
<polygon points="571.0,327.5 572.0,335.6 551.9,323.3 553.2,320.1 557.6,320.2"/>
<polygon points="526.7,118.8 524.8,119.5 519.0,118.0 508.9,109.3 514.6,106.0 522.2,109.3"/>
<polygon points="337.0,257.0 346.3,262.1 353.6,260.9 348.0,251.0 334.4,249.4"/>
<polygon points="449.5,321.6 459.1,319.5 466.0,322.0 470.1,331.8 457.7,328.3"/>
<polygon points="446.0,247.7 458.2,254.4 461.3,260.8 446.9,258.6 446.0,258.1 440.6,250.5 443.0,247.7"/>
<polygon points="355.4,292.5 375.8,302.3 376.0,296.2 368.2,289.2 361.6,287.0 354.3,291.6"/>
<polygon points="342.8,307.5 347.4,315.2 335.5,328.4 327.0,302.8 337.0,304.3"/>
<polygon points="311.4,212.6 311.2,214.3 321.8,225.2 327.4,227.2 332.6,222.8 326.2,216.1"/>
<polygon points="558.0,95.5 565.8,98.6 573.6,97.3 568.9,91.7 559.3,86.6 555.7,86.0 557.0,94.7"/>
<polygon points="533.6,243.6 547.8,250.3 549.6,250.6 553.7,249.4 552.6,246.6 541.0,236.0 538.4,235.0 532.0,241.8"/>
<polygon points="331.7,98.9 343.2,107.5 333.5,110.3 325.0,105.2 319.6,98.1"/>
<polygon points="374.0,119.4 365.4,106.9 351.2,109.3 351.1,109.5 355.6,113.5"/>
<polygon points="350.1,301.5 350.0,307.3 342.9,307.1 337.2,304.0 333.4,292.9 337.3,293.7"/>
<polygon points="482.3,256.6 469.2,249.9 466.5,250.4 465.9,253.8 477.3,261.3 485.9,262.1"/>
<polygon points="423.5,142.9 415.4,139.2 407.5,141.7 408.3,143.0 419.7,150.1 427.3,147.3"/>
<polygon points="476.3,186.6 465.8,189.7 466.6,192.3 471.9,196.4 483.9,199.5 489.4,196.4 489.2,196.0"/>
<polygon points="529.5,97.9 536.1,99.8 543.2,97.6 537.5,90.7 528.7,86.7 520.4,87.1"/>
<polygon points="474.0,287.6 462.8,279.3 462.3,279.1 457.8,279.5 455.9,287.2 461.5,291.3 463.1,291.9 474.3,291.4"/>
<polygon points="338.3,153.8 337.4,152.6 324.1,144.4 317.4,143.3 319.0,151.8 331.9,156.5"/>
<polygon points="441.9,180.6 452.6,180.0 443.6,170.6 433.4,170.1"/>
<polygon points="435.4,311.9 422.2,313.6 423.1,315.9 426.8,318.6 438.8,322.8 446.0,320.2 436.5,312.2"/>
<polygon points="501.8,307.8 492.2,300.1 492.4,294.2 504.2,297.2 508.0,300.0 509.3,308.7"/>
<polygon points="404.5,220.9 420.0,224.1 427.1,230.9 425.7,232.2 414.0,231.1 404.6,225.4"/>
<polygon points="408.2,143.0 400.5,146.7 403.3,150.8 414.2,154.1 420.3,151.3 419.7,150.3"/>
<polygon points="539.0,184.5 531.2,180.1 528.4,182.9 533.3,190.5 544.0,195.8 546.7,194.2"/>
<polygon points="537.2,376.1 526.3,364.8 525.0,364.3 514.0,368.5 535.4,377.5 537.4,377.4"/>
<polygon points="379.6,268.6 379.3,261.3 392.9,264.9 396.8,273.3 392.4,274.0"/>
<polygon points="385.9,202.7 379.2,205.9 374.6,203.8 368.1,198.9 367.1,192.4 367.9,192.2 378.3,195.2"/>
<polygon points="483.9,209.5 472.4,199.3 472.0,196.6 483.8,199.8 495.2,210.1"/>
<polygon points="510.6,178.6 507.1,170.9 521.8,173.5 529.8,178.3 531.0,179.9 528.2,182.8 514.6,181.0"/>
<polygon points="372.6,268.2 370.8,267.6 369.2,266.5 363.7,256.7 371.3,255.1 379.1,261.2 379.4,268.6"/>
<polygon points="451.9,95.6 453.6,103.2 467.7,109.7 474.9,105.2 473.6,103.8 453.4,95.4"/>
<polygon points="523.7,293.7 531.1,296.2 534.2,295.8 535.6,288.6 534.6,287.7 515.7,279.7 514.5,280.2"/>
<polygon points="554.2,249.5 553.1,246.7 563.9,244.4 568.3,246.6 573.8,255.3 568.4,256.1"/>
<polygon points="320.7,86.5 312.7,91.0 315.4,95.1 319.7,97.6 331.3,98.5 333.1,92.6"/>
<polygon points="388.4,119.0 407.9,127.2 409.1,128.3 408.4,131.4 397.7,130.8 384.8,122.7"/>
<polygon points="425.1,282.7 429.1,279.8 444.0,286.3 445.2,294.2 443.7,294.0"/>
<polygon points="365.5,179.3 354.4,170.3 339.1,167.5 341.2,171.8 351.5,179.3 362.9,181.0"/>
<polygon points="365.8,179.3 354.7,170.0 355.5,163.5 360.3,163.6 364.9,165.4 381.3,178.7 372.5,181.5"/>
<polygon points="489.9,177.0 488.8,184.1 482.2,182.3 471.7,173.2 479.4,170.8"/>
<polygon points="446.2,307.6 459.2,318.8 466.0,321.5 467.5,321.4 464.8,313.3 458.7,309.2"/>
<polygon points="390.4,258.1 395.6,254.9 382.0,246.6 376.1,245.9 379.1,252.8"/>
<polygon points="398.5,190.7 386.0,180.3 381.6,179.2 373.0,181.7 384.0,191.4 391.2,194.3"/>
<polygon points="522.0,343.9 509.8,340.3 505.2,336.7 506.2,330.4 516.7,334.6"/>
<polygon points="334.6,257.2 336.9,257.5 346.0,262.4 349.1,266.8 346.8,270.8 333.4,267.0 329.3,262.1"/>
<polygon points="416.1,239.5 415.7,239.5 414.3,245.8 425.2,252.5 428.4,253.2 429.0,247.6 420.8,241.4"/>
<polygon points="510.6,178.8 499.5,178.7 507.5,187.9 521.0,189.3 514.4,181.1"/>
<polygon points="495.6,192.7 507.3,197.4 511.7,205.0 506.7,205.9 489.8,196.5 489.6,196.1"/>
<polygon points="381.9,321.6 397.8,330.3 397.9,333.7 384.7,330.8 378.0,322.5"/>
<polygon points="531.3,261.6 521.7,263.4 525.9,269.7 544.2,274.9 536.0,264.2"/>
<polygon points="440.9,107.8 449.1,108.8 450.0,103.9 436.3,96.8 427.7,97.3 429.5,101.6"/>
<polygon points="384.7,122.8 378.4,122.2 378.3,124.9 390.1,135.0 398.7,135.9 397.4,130.9"/>
<polygon points="374.3,104.3 373.7,106.4 365.5,106.2 354.9,99.4 354.1,92.3 355.8,92.3 370.9,98.9"/>
<polygon points="402.4,275.7 412.2,275.4 423.9,282.6 419.7,287.4 415.7,287.3"/>
<polygon points="442.3,180.8 452.8,180.5 456.3,182.0 465.3,189.5 466.0,192.1 450.9,189.3 441.9,182.3"/>
<polygon points="373.4,282.1 371.1,280.7 353.1,277.4 353.2,279.1 361.7,286.8 368.1,289.1 374.9,285.2"/>
<polygon points="402.0,93.1 407.5,95.7 407.8,105.1 401.3,103.2 390.8,94.4"/>
<polygon points="365.3,106.7 351.2,109.1 344.2,97.6 354.5,99.6 365.3,106.5"/>
<polygon points="522.5,135.9 520.1,129.3 511.7,123.2 501.9,123.0 504.7,132.9 511.7,136.0"/>
<polygon points="388.5,139.3 380.1,138.0 385.6,148.5 391.2,151.5 400.7,153.6 403.0,150.8 400.2,146.7"/>
<polygon points="435.5,311.5 421.8,313.4 413.3,306.3 420.9,301.6"/>
<polygon points="391.3,194.8 384.0,192.0 378.8,195.0 386.4,202.6 393.8,205.1 398.4,201.3"/>
<polygon points="536.5,121.3 538.8,117.0 528.0,109.5 522.7,109.3 527.1,118.7"/>
<polygon points="542.2,256.5 547.4,250.4 533.8,244.0 528.8,247.7 534.6,253.2"/>
<polygon points="560.9,121.5 566.9,122.4 568.8,118.2 560.4,110.2 548.5,111.1 548.1,112.1"/>
<polygon points="553.8,295.9 552.0,286.1 561.2,289.0 569.3,296.3 568.3,298.5 555.1,296.4"/>
<polygon points="484.4,248.9 491.8,247.4 492.2,244.4 481.4,238.3 471.4,238.3 475.2,244.6"/>
<polygon points="338.5,167.1 326.3,163.8 317.2,157.1 315.2,152.3 318.9,152.0 331.9,156.7"/>
<polygon points="489.9,176.7 498.3,178.1 489.8,167.0 488.8,166.5 477.7,167.3 479.7,170.7"/>
<polygon points="410.3,305.1 413.1,306.4 421.6,313.4 422.5,315.8 406.5,315.4 397.7,307.2 397.4,304.0"/>
<polygon points="421.1,85.7 419.3,91.1 427.6,96.8 435.9,96.5 432.7,90.2"/>
<polygon points="412.6,187.8 406.0,182.3 406.7,175.0 409.9,174.3 426.3,183.4 422.4,189.7 417.3,189.6"/>
<polygon points="319.3,250.1 317.7,243.4 328.0,245.0 334.2,249.3 336.7,257.0 334.3,256.8"/>
<polygon points="346.8,271.2 333.3,267.4 332.3,268.3 337.8,278.9 352.8,278.9 352.7,277.2"/>
<polygon points="431.8,221.5 420.3,221.6 413.1,214.4 413.8,209.5 427.4,215.3"/>
<polygon points="418.5,340.9 412.7,332.4 418.4,332.1 430.5,337.1 435.0,344.8 434.0,346.0"/>
<polygon points="557.5,337.5 550.4,323.5 540.2,321.6 539.3,329.2 547.6,335.3"/>
<polygon points="370.4,267.6 368.8,266.5 354.1,261.3 346.7,262.5 349.8,266.9 365.7,273.9"/>
<polygon points="425.1,166.2 424.1,162.8 414.3,154.2 403.2,150.8 400.9,153.7 408.3,160.4"/>
<polygon points="511.3,136.3 504.9,133.4 504.3,133.3 500.3,141.3 507.5,145.8 520.0,145.7"/>
<polygon points="528.3,314.8 521.2,314.6 522.6,320.1 530.7,326.8 539.1,329.1 539.9,321.5"/>
<polygon points="350.2,135.4 353.2,131.4 350.4,128.1 344.9,125.0 329.5,121.9 329.5,123.9 342.7,133.9"/>
<polygon points="487.3,359.2 487.3,360.1 492.5,367.3 512.3,370.2 513.1,368.3 507.0,363.3 494.1,358.0"/>
<polygon points="571.4,262.1 568.3,256.4 554.0,249.7 550.0,250.8 561.2,262.8"/>
<polygon points="443.8,141.4 454.7,144.1 452.2,136.0 442.3,130.2 437.3,131.0 436.5,134.6"/>
<polygon points="447.2,258.9 454.5,268.0 464.9,268.8 461.3,261.3 461.1,261.2"/>
<polygon points="456.8,299.6 461.4,291.3 455.8,287.2 448.8,285.1 444.3,286.3 445.4,294.3"/>
<polygon points="356.8,244.3 345.6,235.2 335.3,233.1 337.1,239.6 347.4,246.2"/>
<polygon points="443.7,148.6 453.4,154.3 457.4,158.9 454.9,162.3 437.8,154.1 434.9,151.0"/>
<polygon points="418.5,297.1 421.3,301.7 435.4,311.2 436.6,311.6 443.9,306.7 439.0,302.5"/>
<polygon points="446.4,247.6 446.2,240.9 450.2,241.6 465.8,250.1 465.2,253.6 458.2,254.0"/>
<polygon points="553.2,351.8 555.6,359.2 561.9,363.6 577.1,367.3 570.1,358.7 554.8,351.6"/>
<polygon points="354.2,99.2 353.4,92.1 339.5,86.2 339.0,86.1 335.8,92.8 344.0,97.2"/>
<polygon points="474.8,349.2 487.1,359.1 493.9,357.8 490.7,349.1 476.6,344.5"/>
<polygon points="502.9,327.1 510.1,321.5 524.9,331.8 525.8,333.5 517.0,334.4 506.1,330.2 503.3,327.9"/>
<polygon points="501.6,308.0 500.2,310.4 484.2,306.1 479.8,303.2 483.1,298.2 491.9,300.3"/>
<polygon points="481.4,238.0 476.6,230.1 482.2,229.6 494.2,233.5 496.3,234.9 498.7,238.2 492.6,244.4 492.4,244.4"/>
<polygon points="388.1,118.9 386.8,116.4 374.1,106.8 365.7,106.7 365.7,106.9 374.2,119.3 378.2,121.9 384.5,122.5"/>
<polygon points="402.4,252.9 402.3,255.8 406.3,258.8 419.7,263.2 422.5,258.5 421.0,256.9 408.6,251.1"/>
<polygon points="438.6,275.9 448.8,285.0 455.8,287.2 457.8,279.5 438.6,271.5 438.0,271.7"/>
<polygon points="490.2,166.5 505.2,169.7 500.1,161.8 499.3,161.3 483.9,156.8 483.4,159.4 489.2,166.0"/>
<polygon points="379.3,206.3 374.7,204.2 366.6,208.1 373.4,214.5 384.3,216.0 385.5,211.8"/>
<polygon points="555.2,375.2 557.9,370.4 547.4,363.5 535.3,362.0 535.3,363.0 548.3,372.5"/>
<polygon points="547.9,162.6 553.9,170.5 561.8,174.6 567.7,173.2 567.2,169.8 561.8,164.8 554.1,161.6"/>
<polygon points="406.9,317.2 417.5,324.5 429.4,327.4 426.0,318.8 422.4,316.2 406.8,315.8"/>
<polygon points="543.6,138.1 559.0,144.8 560.6,153.7 548.2,150.8 539.7,143.2"/>
<polygon points="406.3,167.3 392.3,160.7 391.2,151.8 400.9,153.7 408.2,160.4"/>
<polygon points="471.5,211.6 477.8,219.4 490.9,223.2 493.6,221.8 482.6,212.5 472.4,210.3"/>
<polygon points="553.7,186.8 556.4,195.8 546.9,194.3 539.2,184.4 553.6,186.7"/>
<polygon points="560.6,315.7 553.8,308.6 540.6,306.3 539.4,309.6 552.8,319.6 557.2,319.7"/>
<polygon points="529.6,166.4 525.2,164.5 517.6,165.3 521.9,173.5 529.8,178.2 536.3,174.9"/>
<polygon points="461.0,148.8 453.9,154.3 457.9,158.8 469.8,162.0 470.8,157.3"/>
<polygon points="511.3,152.0 505.6,153.7 497.1,151.2 490.5,142.9 494.5,139.9 499.9,141.5 507.2,146.2"/>
<polygon points="450.0,347.7 455.1,356.5 467.9,359.5 468.1,355.8 463.2,350.7 451.2,346.8"/>
<polygon points="483.1,256.8 487.8,254.2 502.4,261.6 504.7,265.4 490.8,264.4 486.6,262.2"/>
<polygon points="522.7,344.3 522.9,352.6 531.2,357.6 537.4,352.9 534.0,348.1"/>
<polygon points="490.3,177.2 498.5,178.6 499.2,179.0 507.2,187.9 506.8,189.3 490.3,184.9 489.2,184.2"/>
<polygon points="567.1,345.7 559.5,338.6 557.6,337.6 547.7,335.4 545.9,338.7 555.5,348.3 566.4,347.7"/>
<polygon points="439.4,302.3 444.3,306.8 445.8,307.3 458.6,308.8 458.8,301.3 456.8,299.6 445.4,294.4 443.9,294.2 437.9,297.9"/>
<polygon points="426.4,200.5 430.1,202.0 439.1,199.7 438.1,198.2 422.6,189.9 417.5,189.8"/>
<polygon points="338.5,167.5 340.5,171.6 333.3,176.7 333.0,176.7 323.7,171.1 322.2,169.1 326.6,164.2 338.2,167.3"/>
<polygon points="451.1,346.5 446.1,340.4 453.6,339.0 458.2,340.8 465.7,347.6 463.4,350.5"/>
<polygon points="388.1,138.9 379.9,137.4 374.5,134.7 369.0,128.3 378.2,125.2 389.8,135.1"/>
<polygon points="371.1,98.5 355.9,91.9 355.0,84.3 362.1,83.5 362.6,83.7 375.4,93.1 375.8,94.2"/>
<polygon points="424.0,267.0 419.5,263.4 406.5,258.9 411.3,268.1 421.1,271.5"/>
<polygon points="351.5,193.8 356.1,196.2 367.4,198.8 366.6,192.2 350.9,185.5 349.3,191.4"/>
<polygon points="462.1,279.0 453.6,269.2 438.7,265.6 437.9,266.0 438.9,271.5 457.6,279.3"/>
<polygon points="527.7,256.9 515.4,250.4 513.2,246.4 519.7,244.5 528.4,247.6 534.3,253.5"/>
<polygon points="530.3,140.4 539.2,142.9 543.0,137.9 538.6,133.5 536.0,132.4 520.5,129.5 522.9,135.9"/>
<polygon points="482.6,272.5 483.3,272.9 490.3,279.6 490.1,283.0 485.1,283.5 474.6,277.8 472.1,273.1"/>
<polygon points="490.7,117.6 501.9,122.9 511.7,123.2 511.3,121.2 496.2,109.1 485.9,110.9"/>
<polygon points="479.5,316.2 485.3,325.0 479.7,325.5 468.0,321.6 465.4,313.2"/>
<polygon points="404.1,220.7 398.0,215.8 385.6,211.8 384.4,216.1 394.8,225.8 404.1,225.3"/>
<polygon points="510.3,94.1 524.5,99.9 529.0,106.5 527.5,108.9 522.2,108.7 514.9,105.5 508.6,100.0"/>
<polygon points="445.7,247.4 445.6,240.6 437.0,234.6 427.7,231.2 426.3,232.6 429.9,239.9 442.7,247.3"/>
<polygon points="351.3,221.3 350.5,221.9 363.9,234.0 370.9,234.3 372.0,228.7 360.6,221.5"/>
<polygon points="316.9,291.7 316.4,296.2 326.9,302.5 336.8,304.1 333.1,292.7 328.9,290.8"/>
<polygon points="454.1,233.5 456.0,232.0 444.6,223.1 435.3,223.2 441.6,229.9"/>
<polygon points="320.8,115.4 305.9,112.4 304.0,113.9 305.4,117.3 322.5,125.2 329.2,123.8 329.1,121.8 325.4,117.9"/>
<polygon points="386.8,316.9 382.6,317.4 382.1,321.4 397.9,330.1 404.8,328.7 401.8,325.4"/>
<polygon points="569.5,109.3 571.9,106.4 565.8,99.1 557.8,95.9 554.1,102.3 560.8,108.1"/>
<polygon points="531.3,261.5 527.7,256.9 534.3,253.6 542.5,256.9 549.4,262.9 549.0,264.8 536.1,264.1"/>
<polygon points="456.0,199.3 450.5,195.2 451.1,189.9 466.1,192.6 471.3,196.5 471.7,199.1 464.5,202.6"/>
<polygon points="373.0,268.5 387.1,282.4 390.4,283.8 395.2,281.2 392.1,274.2 379.7,269.0"/>
<polygon points="471.1,238.1 461.8,232.6 462.9,225.5 466.5,225.8 476.5,230.1 481.2,238.0"/>
<polygon points="484.7,249.3 492.2,247.8 504.8,258.0 502.6,261.5 487.8,253.9"/>
<polygon points="490.4,185.2 506.7,189.7 510.8,194.5 507.2,197.0 495.9,192.5"/>
<polygon points="378.6,252.8 375.6,245.7 366.0,240.5 358.9,244.9 371.0,253.7"/>
<polygon points="474.1,287.5 462.8,279.3 474.1,277.9 485.2,283.9 486.4,289.7"/>
<polygon points="533.0,338.2 538.5,346.0 533.9,347.9 522.8,344.1 522.5,344.0 517.1,334.6 525.9,333.7"/>
<polygon points="415.6,201.8 416.7,202.1 433.1,212.7 433.1,212.9 427.6,215.2 413.7,209.3 411.1,206.3"/>
<polygon points="530.9,261.4 521.5,263.0 513.0,258.3 511.0,252.5 515.6,250.7 527.4,256.9"/>
<polygon points="503.0,282.2 510.1,290.4 520.2,294.3 523.2,293.8 514.1,280.3 506.6,278.7"/>
<polygon points="406.3,317.4 402.5,325.5 405.3,328.8 412.6,332.2 418.2,331.9 417.2,325.0 406.6,317.4"/>
<polygon points="476.8,302.5 479.5,303.4 483.7,306.3 487.4,315.2 480.2,315.0 468.6,304.8"/>
<polygon points="475.8,185.4 462.7,177.4 456.6,181.7 465.7,189.7 476.2,186.4"/>
<polygon points="548.3,372.9 535.0,363.0 526.4,364.6 537.4,376.1"/>
<polygon points="446.8,258.8 454.2,268.4 453.8,269.1 438.5,265.5 435.6,257.5 445.9,258.3"/>
<polygon points="424.1,162.7 431.6,158.9 420.4,151.5 414.4,154.3"/>
<polygon points="490.6,316.6 504.2,317.0 508.8,320.2 509.6,321.4 502.9,326.6"/>
<polygon points="498.5,97.7 492.4,101.9 496.4,105.6 508.4,109.0 514.2,105.7 507.9,100.1"/>
<polygon points="423.8,282.3 412.4,275.3 409.4,269.1 411.3,268.4 421.2,272.0 427.5,276.8 428.6,279.5 424.7,282.4"/>
<polygon points="548.4,110.9 560.3,110.0 560.6,108.3 553.7,102.4 543.4,97.7 536.3,99.9"/>
<polygon points="453.4,95.3 456.0,88.9 466.6,92.1 473.6,98.1 473.7,103.7"/>
<polygon points="485.7,325.2 496.2,334.1 504.7,336.5 505.9,330.2 503.1,328.0"/>
<polygon points="536.2,131.7 525.4,119.9 527.2,119.3 536.6,121.9 546.8,129.0 538.8,133.1"/>
<polygon points="416.1,295.5 418.0,297.0 420.7,301.5 413.2,306.1 410.4,304.8 399.9,292.7"/>
<polygon points="355.1,163.2 359.9,163.3 356.8,154.3 342.7,148.0 338.0,152.7 338.8,153.9"/>
<polygon points="466.8,225.7 476.4,229.7 481.9,229.4 475.9,221.0 465.5,218.0"/>
<polygon points="351.0,221.1 350.3,221.7 348.5,221.5 329.4,212.3 327.1,208.8 335.3,206.0 341.4,209.3"/>
<polygon points="441.4,182.6 450.3,189.6 449.8,194.9 442.6,193.4 427.2,183.6 432.7,180.8"/>
<polygon points="504.3,297.0 504.0,291.3 509.9,290.7 520.5,294.5 522.8,304.0 508.3,299.9"/>
<polygon points="431.9,180.4 426.5,183.2 426.1,183.1 410.3,174.4 409.0,169.9 422.9,172.4"/>
<polygon points="534.9,200.0 527.8,196.2 524.0,191.0 533.2,190.8 544.0,196.0 545.7,199.3"/>
<polygon points="554.5,125.6 552.0,130.1 547.1,128.9 536.9,121.6 539.3,117.2 544.6,118.5"/>
<polygon points="406.1,317.1 387.0,313.0 379.8,304.9 397.5,307.3 406.3,315.6 406.3,317.1"/>
<polygon points="534.2,151.7 541.9,160.1 547.8,162.5 553.9,161.5 546.9,153.0"/>
<polygon points="423.6,133.0 436.2,134.7 443.6,141.6 440.7,144.7 429.0,139.7"/>
<polygon points="319.3,250.2 334.3,256.8 328.8,261.9 318.1,256.6 315.3,250.6"/>
<polygon points="468.3,110.1 473.3,115.7 481.3,120.3 490.4,117.5 485.6,111.0 475.4,105.6"/>
<polygon points="558.6,238.7 563.9,244.0 552.7,246.6 541.0,235.9 546.7,234.8"/>
<polygon points="440.4,114.9 426.3,110.2 425.1,110.8 431.7,119.6 440.1,124.5 449.3,122.2"/>
<polygon points="471.5,173.5 465.2,171.3 462.0,175.9 463.1,177.4 475.6,185.1 481.9,182.3"/>
<polygon points="367.5,191.9 366.8,192.1 350.8,185.3 350.2,184.6 351.6,179.7 363.1,181.3"/>
<polygon points="460.9,120.4 477.1,129.3 471.6,135.0 464.2,132.9 451.7,123.0"/>
<polygon points="501.4,222.9 497.0,211.0 495.4,210.3 484.1,209.8 482.7,212.4 493.8,221.8 499.9,223.3"/>
<polygon points="348.5,221.6 342.5,226.2 333.0,222.7 326.6,215.9 329.3,212.4"/>
<polygon points="558.7,224.3 569.1,228.8 571.0,236.1 561.2,234.1 551.5,227.3 551.2,225.8"/>
<polygon points="456.3,237.8 449.9,241.3 445.9,240.6 437.1,234.3 441.4,229.9 454.3,233.6"/>
<polygon points="531.8,241.5 538.0,234.9 531.9,231.2 519.4,229.4 521.7,235.7"/>
<polygon points="556.6,94.7 555.3,85.7 543.0,79.9 539.3,80.0 543.0,88.9"/>
<polygon points="418.8,341.2 433.6,346.2 436.7,350.1 428.3,360.6 418.5,341.4"/>
<polygon points="350.9,109.2 350.8,109.4 343.3,107.4 331.9,98.8 333.6,92.6 335.6,93.0 343.9,97.6"/>
<polygon points="392.9,264.8 379.3,261.1 371.5,255.1 371.1,253.9 378.8,253.0 390.5,258.4 393.9,263.9"/>
<polygon points="385.4,148.9 375.8,147.5 377.2,154.7 388.8,160.4 392.0,160.5 390.9,151.8"/>
<polygon points="552.4,216.2 563.7,218.2 558.5,208.3 556.1,207.4 545.8,210.1 549.8,214.9"/>
<polygon points="506.4,278.0 513.8,279.7 515.0,279.2 513.6,271.6 505.1,265.9 491.0,265.0 495.0,271.6"/>
<polygon points="436.8,312.0 446.3,320.3 449.3,321.5 459.0,319.2 445.8,307.4 444.3,306.8"/>
<polygon points="499.8,223.6 510.2,234.7 496.4,234.6 494.4,233.2 491.3,223.5 493.9,222.1"/>
<polygon points="317.0,226.8 319.9,234.2 326.6,238.5 336.7,239.5 335.0,233.0 327.6,227.5 321.9,225.6"/>
<polygon points="439.6,199.7 438.7,198.3 443.0,194.2 449.8,195.5 455.3,199.4 454.0,205.4 445.7,203.5"/>
<polygon points="492.5,244.5 492.6,244.5 510.7,252.4 512.6,258.3 505.0,258.1 492.1,247.5"/>
<polygon points="556.2,207.1 558.7,208.1 562.7,208.5 568.0,202.4 556.5,195.9 546.9,194.3 544.2,196.0 545.9,199.3"/>
<polygon points="413.9,231.5 416.1,239.4 420.8,241.1 429.5,239.9 425.9,232.5"/>
<polygon points="438.6,276.2 448.5,284.9 444.0,286.1 429.2,279.7 428.1,276.9"/>
<polygon points="396.2,87.8 383.0,83.4 381.6,84.1 386.5,92.4 390.4,94.1 401.9,92.7"/>
<polygon points="358.7,244.7 365.7,240.4 362.8,236.5 348.2,232.0 345.9,235.1 357.0,244.2"/>
<polygon points="549.4,262.9 560.8,264.4 561.2,263.2 549.6,250.6 547.9,250.4 542.5,256.8"/>
<polygon points="397.9,131.2 399.2,136.0 407.2,141.3 415.0,138.9 408.3,131.7"/>
<polygon points="482.5,256.5 487.3,253.8 484.2,249.2 475.1,244.9 469.4,245.8 469.2,249.7"/>
<polygon points="371.0,253.8 358.8,244.9 357.0,244.4 347.5,246.4 349.1,250.0 363.6,256.7 371.3,255.0"/>
<polygon points="399.0,292.6 389.0,295.2 389.7,297.4 397.2,303.6 410.1,304.8 399.6,292.9"/>
<polygon points="432.2,221.5 427.8,215.3 433.3,213.1 444.0,220.1 444.3,222.8 435.2,222.9"/>
<polygon points="489.7,100.7 474.0,97.8 467.2,91.9 469.2,88.9 478.9,90.6"/>
<polygon points="474.8,148.4 460.8,137.3 452.5,136.1 455.0,144.2 460.9,148.3"/>
<polygon points="440.4,114.5 440.5,107.9 429.6,102.0 423.3,102.9 426.3,109.8"/>
<polygon points="522.5,344.3 522.7,352.5 515.2,350.8 508.2,345.6 509.7,340.6 522.2,344.1"/>
<polygon points="465.2,269.2 454.3,268.4 453.9,269.1 462.3,279.0 462.8,279.2 474.0,277.8 471.5,272.9"/>
<polygon points="363.6,256.7 369.1,266.5 353.9,261.0 348.2,250.8 349.1,250.1"/>
<polygon points="442.5,247.4 429.8,240.3 421.1,241.4 429.5,247.5 440.1,250.2"/>
<polygon points="547.6,112.1 529.5,106.6 527.9,109.2 539.1,117.1 544.5,118.3"/>
<polygon points="376.2,94.4 375.8,93.3 386.4,92.6 390.4,94.3 401.2,103.6 394.6,106.0"/>
<polygon points="388.0,241.7 383.9,241.4 381.9,246.2 395.9,254.9 402.1,255.7 402.2,252.9"/>
<polygon points="389.5,239.1 378.4,230.0 372.4,228.9 371.3,234.4 383.6,241.0 387.7,241.4"/>
<polygon points="397.1,273.3 393.2,265.0 394.2,264.1 408.9,269.0 411.9,275.2 402.2,275.4"/>
<polygon points="404.5,220.6 398.4,215.8 400.3,211.3 412.6,214.6 419.9,221.7 420.0,223.7"/>
<polygon points="456.6,237.8 469.0,245.4 474.7,244.5 470.8,238.2 461.8,232.9 456.4,232.3 454.6,233.7"/>
<polygon points="357.7,303.0 365.0,307.0 366.0,308.1 362.7,314.3 350.6,307.4 350.7,301.7"/>
<polygon points="553.0,295.9 536.1,288.6 535.0,287.6 536.7,281.8 547.9,283.1 551.8,285.9 553.6,295.9"/>
<polygon points="488.8,166.2 477.5,167.1 470.1,162.2 471.1,157.4 483.0,159.3"/>
<polygon points="357.7,302.6 365.5,306.8 376.2,302.8 375.7,302.3 355.5,292.6"/>
<polygon points="567.2,275.4 555.7,271.8 553.6,276.2 569.2,285.3 571.5,279.4"/>
<polygon points="440.1,250.6 429.5,247.9 428.9,253.3 435.6,257.0 445.5,258.0"/>
<polygon points="422.9,171.9 408.8,169.7 406.5,167.4 408.3,160.5 425.0,166.2 425.1,166.3"/>
<polygon points="457.6,328.5 470.2,332.0 473.3,333.9 473.4,341.7 463.3,338.1 456.6,331.5"/>
<polygon points="431.0,119.7 416.7,118.2 411.9,107.8 424.5,110.8"/>
<polygon points="327.7,244.7 326.3,238.7 319.7,234.6 309.3,233.2 314.7,241.3 317.7,243.0"/>
<polygon points="538.9,206.5 528.2,206.6 520.2,198.4 527.7,196.3 534.8,200.3"/>
<polygon points="358.5,147.4 362.6,151.8 357.0,154.0 342.8,147.7 338.2,140.7 338.6,140.1"/>
<polygon points="443.6,170.5 445.1,168.9 461.5,175.8 462.7,177.4 456.6,181.7 452.7,180.1"/>
<polygon points="443.5,165.7 455.0,162.7 454.9,162.5 437.7,154.2 434.4,159.7"/>
<polygon points="507.9,345.4 500.5,343.2 493.6,338.2 496.3,334.4 504.7,336.8 509.3,340.5"/>
<polygon points="318.2,256.9 312.7,258.0 315.4,263.7 316.8,264.5 331.7,267.9 332.7,267.1 328.6,262.1"/>
<polygon points="526.8,148.9 526.1,155.8 535.9,161.8 541.7,160.2 534.1,151.6 529.6,149.4"/>
<polygon points="533.2,243.5 528.2,247.3 520.0,244.3 513.6,236.2 521.5,236.1 531.6,241.8"/>
<polygon points="490.8,279.8 490.5,283.3 503.9,291.2 509.8,290.6 502.6,282.1"/>
<polygon points="566.3,347.9 573.6,355.9 570.1,358.6 554.9,351.5 555.7,348.4"/>
<polygon points="444.2,220.1 452.8,219.8 448.0,212.2 438.1,209.0 433.1,212.7 433.2,212.9"/>
<polygon points="423.8,132.8 435.9,134.3 436.7,130.8 421.2,123.4 421.7,131.6"/>
<polygon points="530.2,218.9 518.3,207.4 528.1,207.5 538.0,216.0"/>
<polygon points="359.1,142.8 370.2,144.2 365.5,136.4 353.4,131.5 350.4,135.5"/>
<polygon points="510.2,321.5 524.9,331.7 530.6,327.0 522.3,320.1 509.3,320.2"/>
<polygon points="486.1,262.6 490.3,265.0 494.2,271.4 483.4,272.1 482.7,271.7 476.5,266.1 477.8,261.8"/>
<polygon points="482.4,336.4 492.5,348.2 497.0,349.3 500.0,343.4 493.2,338.5 484.4,335.9"/>
<polygon points="429.6,327.8 417.6,325.1 418.5,332.1 430.5,336.9 436.3,335.2 433.7,330.7"/>
<polygon points="474.7,349.4 466.0,347.8 463.7,350.6 468.6,355.8 486.8,359.9 486.9,359.0"/>
<polygon points="500.7,161.8 511.4,162.5 517.3,165.3 521.6,173.4 507.2,170.8 505.7,169.8"/>
<polygon points="437.7,271.6 438.4,271.3 437.4,265.8 422.7,258.8 420.0,263.3 424.5,267.0"/>
<polygon points="529.9,140.8 529.5,149.3 526.8,148.8 520.5,145.8 511.8,136.1 522.6,136.1"/>
<polygon points="375.0,104.4 395.3,109.5 394.4,106.0 376.3,94.6 371.5,98.9"/>
<polygon points="467.8,321.7 466.3,321.9 470.4,331.9 473.4,333.8 482.0,336.1 484.0,335.7 479.7,325.7"/>
<polygon points="476.0,266.2 461.9,261.2 465.5,269.0 471.6,272.7 482.4,272.0"/>
<polygon points="553.0,295.9 549.5,301.9 554.0,307.3 568.2,308.4 568.1,307.7 554.9,296.6 553.6,296.0"/>
<polygon points="332.6,184.2 348.6,191.3 350.9,193.7 341.2,196.4 327.8,185.0"/>
<polygon points="315.3,273.5 320.5,271.6 337.2,279.1 338.2,281.1 320.3,280.8 317.4,279.2"/>
<polygon points="407.1,141.6 398.8,136.2 390.4,135.3 388.7,139.2 400.3,146.4 407.9,142.9"/>
<polygon points="449.3,347.3 435.4,344.6 430.9,337.2 436.7,335.6 445.6,340.5 450.5,346.4"/>
<polygon points="543.8,169.9 548.5,177.2 547.0,178.3 536.6,174.8 529.9,166.4 537.1,166.1"/>
<polygon points="398.0,239.8 397.0,231.8 415.4,239.4 414.0,245.7 406.7,245.3"/>
<polygon points="531.4,357.7 537.6,353.1 547.1,358.7 547.3,363.0 535.1,361.7"/>
<polygon points="490.3,142.9 478.9,140.7 480.4,147.7 494.5,152.2 496.9,151.3"/>
<polygon points="474.4,291.8 463.5,292.1 476.6,302.0 479.3,302.9 482.6,298.0"/>
<polygon points="357.5,154.4 360.5,163.3 364.9,165.0 377.3,164.9 369.4,155.1 363.0,152.2"/>
<polygon points="375.2,285.4 368.5,289.3 376.3,296.0 389.2,297.2 388.5,295.0"/>
<polygon points="420.0,287.6 424.1,282.7 425.0,282.8 443.7,294.1 437.8,297.8"/>
<polygon points="445.9,330.7 433.9,330.7 429.8,327.7 426.4,318.8 439.1,323.1"/>
<polygon points="446.4,330.9 453.7,338.7 458.2,340.5 463.0,338.1 456.5,331.7"/>
<polygon points="549.1,302.0 534.8,296.3 531.6,296.7 540.6,305.9 553.6,308.2 553.7,307.1"/>
<polygon points="333.4,110.4 324.9,105.4 315.1,106.6 321.1,115.1 325.7,117.8 334.8,112.2"/>
<polygon points="366.6,208.1 359.4,205.1 356.0,196.5 367.7,198.9 374.6,204.2"/>
<polygon points="524.5,364.0 512.8,356.4 508.2,355.5 507.5,363.3 513.3,368.0 513.7,368.1"/>
<polygon points="423.8,142.9 428.8,139.9 440.8,144.9 443.5,148.4 434.7,150.8 427.7,147.3"/>
<polygon points="514.7,181.1 528.1,182.9 532.9,190.6 523.8,190.7 521.3,189.3"/>
<polygon points="526.3,156.2 535.4,161.8 536.6,165.7 529.6,165.9 525.5,164.1 517.2,155.1"/>
<polygon points="465.4,217.7 475.9,220.6 477.6,219.4 471.3,211.7 461.5,210.9 461.6,214.8"/>
<polygon points="356.3,120.6 340.1,115.6 345.2,124.8 350.4,127.9 359.6,123.6"/>
<polygon points="338.0,139.8 337.6,140.4 325.0,138.4 314.6,131.4 323.9,129.1 337.9,139.5"/>
<polygon points="406.9,245.5 414.2,245.9 425.1,252.6 420.9,256.8 408.7,251.0"/>
<polygon points="420.8,85.4 418.9,91.0 413.1,89.7 405.3,84.5 404.5,79.5 416.0,80.7"/>
<polygon points="559.5,338.4 572.4,336.1 572.1,335.9 551.5,323.3 550.5,323.5 557.7,337.5"/>
<polygon points="392.7,274.2 397.1,273.6 402.3,275.9 415.5,287.3 414.0,288.5 395.8,281.4"/>
<polygon points="406.1,317.2 402.1,325.4 386.7,316.6 387.0,313.1"/>
<polygon points="547.5,363.1 558.3,370.4 561.3,370.5 561.8,363.7 555.5,359.3 547.4,358.8"/>
<polygon points="448.5,212.0 461.2,214.5 461.0,210.7 454.3,206.0 445.9,204.1"/>
<polygon points="558.6,224.1 552.2,216.6 549.5,215.1 541.2,217.1 551.1,225.6"/>
<polygon points="349.8,184.4 333.7,177.1 341.0,172.0 351.1,179.6"/></g><path d="M391.8 206.0l20.3 7.6 M337.9 356.5l18.6 5.4 M346.7 255.3l18.8 6.0 M524.8 238.5l12.3 3.7 M478.9 270.8l13.2 5.3 M535.1 173.9l13.8 6.2 M409.3 171.7l18.4 6.2 M388.0 144.8l18.3 6.1 M540.0 264.7l15.7 5.4 M432.9 343.5l13.8 4.2 M359.3 146.7l21.4 10.3 M420.2 126.2l12.2 4.6 M333.0 125.7l28.6 12.1 M365.5 118.8l24.0 8.4 M362.6 186.9l23.3 10.3 M415.6 137.1l19.1 7.2 M396.5 334.7l15.3 4.8 M424.7 249.6l15.1 6.7 M397.4 136.3l19.1 8.6 M375.4 268.9l16.7 5.9 M512.4 157.1l12.5 3.5 M424.1 188.2l15.4 7.8 M441.1 149.4l12.8 3.7 M388.7 186.9l19.4 8.8 M531.7 125.5l12.1 6.3 M499.7 183.6l27.3 8.0 M407.7 215.8l26.3 8.5 M497.6 281.4l10.6 5.3 M385.8 323.8l23.6 7.0 M416.8 265.1l13.4 5.0 M549.7 254.0l13.5 6.1 M518.2 108.1l21.4 10.5 M381.0 151.5l18.4 5.4 M539.2 148.8l20.3 6.1 M350.0 206.0l25.8 7.5 M538.1 269.2l18.5 6.6 M404.0 298.0l16.3 6.5 M536.5 286.4l26.2 7.8 M541.1 100.6l26.2 12.9 M432.8 262.5l23.2 9.1 M351.5 189.4l13.4 5.6 M526.3 350.6l13.2 5.3 M463.7 280.1l24.5 7.0 M509.5 226.0l16.0 7.4 M463.1 185.6l16.7 6.2 M538.4 192.2l11.7 4.4 M540.9 301.5l27.6 10.2 M547.3 354.4l26.8 11.2 M406.7 206.6l12.7 5.6 M355.6 157.8l20.4 7.4 M341.5 301.1l21.9 7.6 M475.3 353.1l28.6 10.5 M422.7 241.5l24.1 10.8 M455.7 211.8l18.1 7.5 M470.9 111.4l11.1 4.5 M377.9 308.0l17.6 6.9 M394.6 349.9l26.8 10.5 M383.0 183.6l11.7 4.7 M516.8 327.5l29.9 10.7 M527.5 261.0l17.6 8.9 M435.5 234.9l14.4 5.6 M393.3 292.1l24.7 11.5 M344.6 293.7l21.1 7.1 M383.6 317.9l10.5 5.1 M432.5 238.9l20.9 8.7 M446.4 168.5l13.7 4.9 M345.0 245.8l29.5 14.1 M516.8 136.6l17.1 6.0 M337.4 102.9l29.1 8.6 M375.4 313.2l13.2 3.8 M387.0 285.9l11.3 4.6 M336.7 339.7l17.5 5.4 M538.6 292.4l28.7 12.8 M502.3 152.4l12.6 4.3 M462.8 294.2l23.0 10.9 M503.9 184.8l26.2 9.4 M469.3 158.7l22.0 6.4 M492.9 352.5l17.3 5.9 M373.2 207.8l21.0 8.9 M457.6 276.9l27.2 9.6 M518.5 153.0l19.7 8.8 M488.9 267.2l20.0 7.6 M400.7 322.9l15.6 5.9 M378.6 278.6l23.8 11.9 M516.3 104.8l18.7 8.0 M473.9 213.8l24.8 12.4 M427.5 216.1l26.7 12.2 M332.7 103.5l19.0 6.5 M392.9 329.2l22.0 10.0 M528.3 278.8l14.2 6.0 M532.6 355.4l20.1 5.8 M514.4 244.4l11.1 5.4 M488.0 185.0l17.4 8.1 M525.7 321.0l28.7 11.5 M439.5 191.5l28.8 10.5 M368.0 280.5l25.4 8.3 M407.8 310.1l17.3 6.1 M427.9 332.4l15.4 6.5 M472.6 256.6l12.8 6.2 M529.2 201.6l19.8 5.8 M419.8 339.5l16.2 5.8 M363.9 211.5l12.1 5.6 M538.6 289.3l29.3 9.9 M358.6 194.5l28.0 7.9 M510.6 160.8l12.5 5.9 M507.3 120.0l14.3 4.3 M428.3 326.5l28.8 14.2 M374.6 279.6l29.3 12.1 M387.4 126.5l14.9 7.3 M522.7 233.8l20.3 7.2" stroke="#000" stroke-width="1.3" fill="none"/></g><polygon points="476.8,347 481,347 481,364.7 476.8,364.7" fill="#c9c8a8"/><path d="M329 161.5 L442.6 98.5" stroke="#000" stroke-width="1.2"/><polygon points="333.7,108 372.2,122.2 372.2,124.5 333.7,110.3" fill="#c9c8a8"/><polygon points="252,240.1 365.5,178.5 421.5,244.5 474,260 474,429.8 252,361" fill="#c5a2ac"/><polygon points="365.5,178.5 367.5,174.8 424,240.8 476.5,256.5 476.5,428 474,429.8 474,260 421.5,244.5" fill="#b0909e" stroke="#000" stroke-width="0.9" stroke-linejoin="round"/></svg>
</body></html>
